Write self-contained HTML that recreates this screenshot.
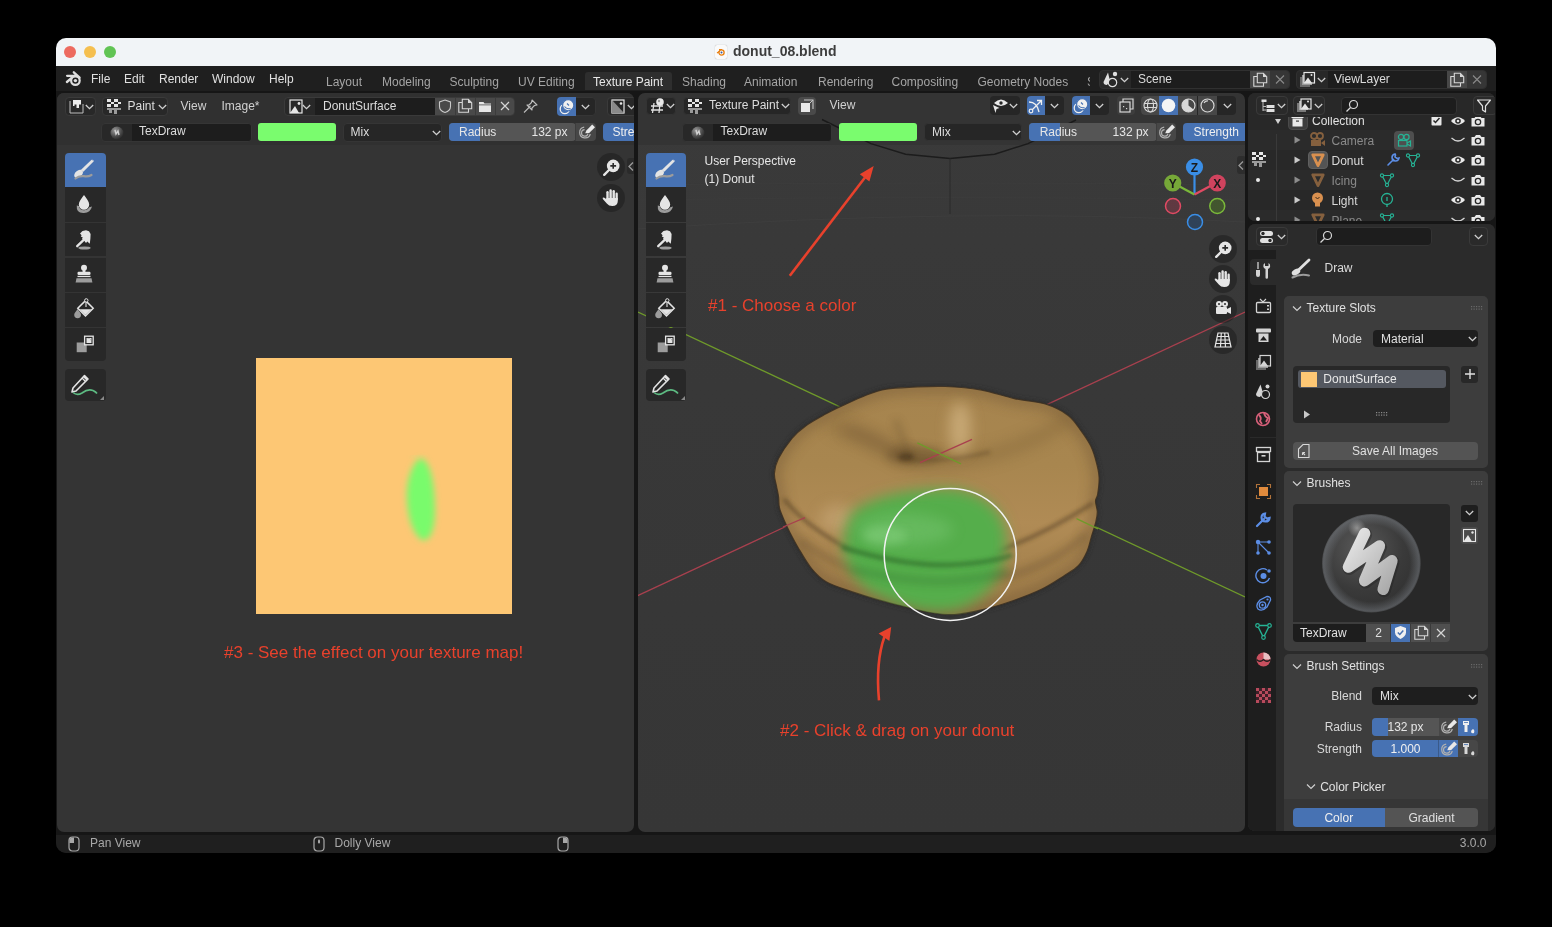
<!DOCTYPE html><html><head><meta charset="utf-8"><style>
html,body{margin:0;padding:0;background:#000;width:1552px;height:927px;overflow:hidden}
body>div,body>svg{position:absolute}
body div,body svg{position:absolute}
.t{position:absolute;font-family:"Liberation Sans",sans-serif;white-space:nowrap}
</style></head><body><div style="position:absolute;left:0;top:0;width:1552px;height:927px;will-change:transform">
<div style="left:56px;top:38px;width:1440px;height:815px;background:#161616;border-radius:10px;"></div>
<div style="left:56px;top:38px;width:1440px;height:28px;background:#f1f4f7;border-radius:10px 10px 0 0"></div>
<div style="left:64px;top:46px;width:12px;height:12px;background:#ed6a5f;border-radius:6px;"></div>
<div style="left:84px;top:46px;width:12px;height:12px;background:#f5bf4f;border-radius:6px;"></div>
<div style="left:104px;top:46px;width:12px;height:12px;background:#61c454;border-radius:6px;"></div>
<div class="t" style="left:733px;top:44px;font-size:14px;line-height:14px;color:#3d3d3d;font-weight:bold;">donut_08.blend</div>
<div style="left:715px;top:45px;width:12px;height:14px;background:#fafafa;border-radius:2px;box-shadow:0 0 1px #999"></div>
<svg style="position:absolute;left:716px;top:47px;" width="10" height="10" viewBox="0 0 10 10"><circle cx="5.5" cy="5.5" r="2.6" fill="none" stroke="#e87d0d" stroke-width="1.3"/><circle cx="5.5" cy="5.5" r="1" fill="#3a5a9a"/><path d="M1 6 L4 4 M3 2.5 L6 2.5" stroke="#e87d0d" stroke-width="1.2"/></svg>
<div style="left:56px;top:66px;width:1440px;height:25px;background:#1f1f1f;"></div>
<div style="left:57px;top:93px;width:577px;height:739px;background:#343434;border-radius:7px;"></div>
<div style="left:638px;top:93px;width:607px;height:739px;background:linear-gradient(#3a3a3a,#383838 40%,#363636);border-radius:7px;"></div>
<div style="left:1248px;top:93px;width:247px;height:128px;background:#282828;border-radius:7px;"></div>
<div style="left:1248px;top:224px;width:247px;height:607px;background:#2b2b2b;border-radius:7px;"></div>
<div style="left:56px;top:835px;width:1440px;height:18px;background:#1f1f1f;border-radius:0 0 10px 10px"></div>
<svg style="position:absolute;left:60px;top:68px;" width="30" height="22" viewBox="0 0 30 22"><g stroke="#dedede" fill="none" stroke-linecap="round"><circle cx="15.4" cy="12.6" r="4.3" stroke-width="2.2"/><path d="M7.1 7.8 L14.7 7.8 M13.8 4.3 L19.6 9.6 M6.9 14 L11.6 10" stroke-width="2.3"/></g><circle cx="15.4" cy="12.6" r="1.7" fill="#dedede"/></svg>
<div class="t" style="left:91px;top:73px;font-size:12px;line-height:12px;color:#e0e0e0;font-weight:normal;">File</div>
<div class="t" style="left:124px;top:73px;font-size:12px;line-height:12px;color:#e0e0e0;font-weight:normal;">Edit</div>
<div class="t" style="left:159px;top:73px;font-size:12px;line-height:12px;color:#e0e0e0;font-weight:normal;">Render</div>
<div class="t" style="left:212px;top:73px;font-size:12px;line-height:12px;color:#e0e0e0;font-weight:normal;">Window</div>
<div class="t" style="left:269px;top:73px;font-size:12px;line-height:12px;color:#e0e0e0;font-weight:normal;">Help</div>
<div style="left:585px;top:72px;width:86.5px;height:18px;background:#2e2e2e;border-radius:3px 3px 0 0"></div>
<div class="t" style="left:326px;top:75.5px;font-size:12px;line-height:12px;color:#a5a5a5;font-weight:normal;">Layout</div>
<div class="t" style="left:382px;top:75.5px;font-size:12px;line-height:12px;color:#a5a5a5;font-weight:normal;">Modeling</div>
<div class="t" style="left:449.5px;top:75.5px;font-size:12px;line-height:12px;color:#a5a5a5;font-weight:normal;">Sculpting</div>
<div class="t" style="left:518px;top:75.5px;font-size:12px;line-height:12px;color:#a5a5a5;font-weight:normal;">UV Editing</div>
<div class="t" style="left:593px;top:75.5px;font-size:12px;line-height:12px;color:#e8e8e8;font-weight:normal;">Texture Paint</div>
<div class="t" style="left:682px;top:75.5px;font-size:12px;line-height:12px;color:#a5a5a5;font-weight:normal;">Shading</div>
<div class="t" style="left:744px;top:75.5px;font-size:12px;line-height:12px;color:#a5a5a5;font-weight:normal;">Animation</div>
<div class="t" style="left:818px;top:75.5px;font-size:12px;line-height:12px;color:#a5a5a5;font-weight:normal;">Rendering</div>
<div class="t" style="left:891.5px;top:75.5px;font-size:12px;line-height:12px;color:#a5a5a5;font-weight:normal;">Compositing</div>
<div class="t" style="left:977.5px;top:75.5px;font-size:12px;line-height:12px;color:#a5a5a5;font-weight:normal;">Geometry Nodes</div>
<div class="t" style="left:1087px;top:75.5px;font-size:12px;line-height:12px;color:#a5a5a5;font-weight:normal;width:3px;overflow:hidden">S</div>
<div style="left:1099px;top:70px;width:191px;height:18.5px;background:#282828;border-radius:4px;box-sizing:border-box;border:1px solid #303030"></div>
<div style="left:1130.5px;top:70.5px;width:119.5px;height:17.5px;background:#1d1d1d;"></div>
<div style="left:1250px;top:70.5px;width:19.5px;height:17.5px;background:#474747;"></div>
<div style="left:1269.5px;top:70.5px;width:19.5px;height:17.5px;background:#363636;border-radius:0 3px 3px 0"></div>
<div class="t" style="left:1138px;top:73px;font-size:12px;line-height:12px;color:#dcdcdc;font-weight:normal;">Scene</div>
<div style="left:1296px;top:70px;width:191px;height:18.5px;background:#282828;border-radius:4px;box-sizing:border-box;border:1px solid #303030"></div>
<div style="left:1327.5px;top:70.5px;width:119.5px;height:17.5px;background:#1d1d1d;"></div>
<div style="left:1447px;top:70.5px;width:19.5px;height:17.5px;background:#474747;"></div>
<div style="left:1466.5px;top:70.5px;width:19.5px;height:17.5px;background:#363636;border-radius:0 3px 3px 0"></div>
<div class="t" style="left:1334px;top:73px;font-size:12px;line-height:12px;color:#dcdcdc;font-weight:normal;">ViewLayer</div>
<svg style="position:absolute;left:1102px;top:71px;" width="20" height="17" viewBox="0 0 20 17"><path d="M6 1.5 L1.5 11 Q1.5 14 5 14 L8 10 Z" fill="#e0e0e0"/><circle cx="13" cy="3" r="2.2" fill="#e0e0e0"/><circle cx="10.5" cy="11.5" r="4.2" stroke="#e0e0e0" stroke-width="1.2" fill="#282828"/></svg>
<svg style="position:absolute;left:1120.0px;top:76.5px;" width="9" height="6" viewBox="0 0 9 6"><path d="M0.8 1 L4.5 4.7 L8.2 1" stroke="#cfcfcf" stroke-width="1.3" fill="none"/></svg>
<svg style="position:absolute;left:1252px;top:72px;" width="16" height="15" viewBox="0 0 16 15"><path d="M5 4.5 H1.8 V14.2 H11.5 V11" stroke="#d8d8d8" stroke-width="1.1" fill="none"/><path d="M5.3 1.3 H11.3 L14.7 4.7 V10.7 H5.3 Z" stroke="#d8d8d8" stroke-width="1.1" fill="none"/><path d="M11 1.3 L14.7 5 H11 Z" fill="#d8d8d8"/></svg>
<svg style="position:absolute;left:1272px;top:72px;" width="16" height="15" viewBox="0 0 16 15"><path d="M4 3.5 L12 11.5 M12 3.5 L4 11.5" stroke="#8a8a8a" stroke-width="1.1"/></svg>
<svg style="position:absolute;left:1299px;top:71px;" width="20" height="17" viewBox="0 0 20 17"><rect x="1" y="6" width="10" height="10" fill="#6a6a6a"/><rect x="3" y="4" width="10" height="10" fill="#9a9a9a"/><rect x="5" y="1.5" width="10.5" height="10.5" fill="#282828" stroke="#e6e6e6" stroke-width="1.2"/><path d="M5 12 L9 6.5 L13 12 Z" fill="#e6e6e6"/><circle cx="12.5" cy="4" r="1" fill="#e6e6e6"/></svg>
<svg style="position:absolute;left:1317.0px;top:76.5px;" width="9" height="6" viewBox="0 0 9 6"><path d="M0.8 1 L4.5 4.7 L8.2 1" stroke="#cfcfcf" stroke-width="1.3" fill="none"/></svg>
<svg style="position:absolute;left:1449px;top:72px;" width="16" height="15" viewBox="0 0 16 15"><path d="M5 4.5 H1.8 V14.2 H11.5 V11" stroke="#d8d8d8" stroke-width="1.1" fill="none"/><path d="M5.3 1.3 H11.3 L14.7 4.7 V10.7 H5.3 Z" stroke="#d8d8d8" stroke-width="1.1" fill="none"/><path d="M11 1.3 L14.7 5 H11 Z" fill="#d8d8d8"/></svg>
<svg style="position:absolute;left:1469px;top:72px;" width="16" height="15" viewBox="0 0 16 15"><path d="M4 3.5 L12 11.5 M12 3.5 L4 11.5" stroke="#8a8a8a" stroke-width="1.1"/></svg>
<div style="position:absolute;left:57px;top:93px;width:577px;height:739px;overflow:hidden;border-radius:7px"><div style="position:absolute;left:-57px;top:-93px;width:1552px;height:927px">
<div style="left:57px;top:93px;width:577px;height:52px;background:#303030;"></div>
<div style="left:64.5px;top:96.5px;width:31px;height:19px;background:#282828;border-radius:4px;box-sizing:border-box;border:1px solid #3a3a3a"></div>
<svg style="position:absolute;left:69px;top:99px;" width="15" height="15" viewBox="0 0 15 15"><path d="M1 2 V14 H14 V5" stroke="#bdbdbd" stroke-width="1" fill="none"/><path d="M4 1 H12 V5.5 H10 V9 H7.5 V5.5 H5.5 V7 H4 Z" fill="#ececec"/></svg>
<svg style="position:absolute;left:84.5px;top:103.5px;" width="9" height="6" viewBox="0 0 9 6"><path d="M0.8 1 L4.5 4.7 L8.2 1" stroke="#cfcfcf" stroke-width="1.3" fill="none"/></svg>
<div style="left:101.5px;top:96.5px;width:66px;height:19px;background:#282828;border-radius:4px;box-sizing:border-box;border:1px solid #3a3a3a"></div>
<svg style="position:absolute;left:107px;top:99px" width="14" height="15" viewBox="0 0 14 15" shape-rendering="crispEdges"><rect x="0.0" y="0.0" width="3.5" height="2.6" fill="#e6e6e6"/><rect x="0.0" y="5.2" width="3.5" height="2.6" fill="#e6e6e6"/><rect x="3.5" y="2.6" width="3.5" height="2.6" fill="#e6e6e6"/><rect x="7.0" y="0.0" width="3.5" height="2.6" fill="#e6e6e6"/><rect x="7.0" y="5.2" width="3.5" height="2.6" fill="#e6e6e6"/><rect x="10.5" y="2.6" width="3.5" height="2.6" fill="#e6e6e6"/><path d="M0 8.6 H14 V11 H10 V14.5 H7 V11 H4.5 V13.5 H1.5 V11 H0 Z" fill="#9a9a9a"/></svg>
<div class="t" style="left:127.5px;top:99.5px;font-size:12px;line-height:12px;color:#dcdcdc;font-weight:normal;">Paint</div>
<svg style="position:absolute;left:157.5px;top:103.5px;" width="9" height="6" viewBox="0 0 9 6"><path d="M0.8 1 L4.5 4.7 L8.2 1" stroke="#cfcfcf" stroke-width="1.3" fill="none"/></svg>
<div class="t" style="left:180.5px;top:99.5px;font-size:12px;line-height:12px;color:#d0d0d0;font-weight:normal;">View</div>
<div class="t" style="left:221.5px;top:99.5px;font-size:12px;line-height:12px;color:#d0d0d0;font-weight:normal;">Image*</div>
<div style="left:284px;top:96.5px;width:231px;height:19px;background:#282828;border-radius:4px;box-sizing:border-box;border:1px solid #3a3a3a"></div>
<svg style="position:absolute;left:288.5px;top:99px;" width="14" height="15" viewBox="0 0 14 15"><rect x="1" y="1" width="12" height="13" stroke="#e6e6e6" stroke-width="1.2" fill="none"/><path d="M1 14 L6 7 L10 14 Z" fill="#e6e6e6"/><circle cx="10" cy="4.5" r="1.4" fill="#e6e6e6"/></svg>
<svg style="position:absolute;left:301.5px;top:103.5px;" width="9" height="6" viewBox="0 0 9 6"><path d="M0.8 1 L4.5 4.7 L8.2 1" stroke="#cfcfcf" stroke-width="1.3" fill="none"/></svg>
<div style="left:315px;top:97.5px;width:120px;height:17px;background:#1d1d1d;"></div>
<div class="t" style="left:323px;top:99.7px;font-size:12px;line-height:12px;color:#dcdcdc;font-weight:normal;">DonutSurface</div>
<div style="left:435px;top:97.5px;width:79px;height:17px;background:#494949;border-radius:0 3px 3px 0"></div>
<div style="left:454.5px;top:97.5px;width:1px;height:17px;background:#3b3b3b;"></div>
<div style="left:474.5px;top:97.5px;width:1px;height:17px;background:#3b3b3b;"></div>
<div style="left:494.5px;top:97.5px;width:1px;height:17px;background:#3b3b3b;"></div>
<svg style="position:absolute;left:437px;top:98px;" width="16" height="16" viewBox="0 0 16 16"><path d="M8 2 L13.5 4 V8.5 C13.5 11.5 11 13.5 8 14.5 C5 13.5 2.5 11.5 2.5 8.5 V4 Z" stroke="#c8c8c8" stroke-width="1.1" fill="none"/></svg>
<svg style="position:absolute;left:457px;top:98px;" width="16" height="16" viewBox="0 0 16 16"><path d="M5 4.5 H1.8 V14.2 H11.5 V11" stroke="#d8d8d8" stroke-width="1.1" fill="none"/><path d="M5.3 1.3 H11.3 L14.7 4.7 V10.7 H5.3 Z" stroke="#d8d8d8" stroke-width="1.1" fill="none"/><path d="M11 1.3 L14.7 5 H11 Z" fill="#d8d8d8"/></svg>
<svg style="position:absolute;left:477px;top:98px;" width="16" height="16" viewBox="0 0 16 16"><path d="M2 4 H6.5 L7.5 5.5 H14 V14 H2 Z" fill="#e6e6e6"/><rect x="2" y="6.5" width="12" height="0.8" fill="#494949"/></svg>
<svg style="position:absolute;left:497px;top:98px;" width="16" height="16" viewBox="0 0 16 16"><path d="M4 4 L12 12 M12 4 L4 12" stroke="#d6d6d6" stroke-width="1.2"/></svg>
<svg style="position:absolute;left:522px;top:98px;" width="17" height="16" viewBox="0 0 17 16"><path d="M8.5 8 L2 14.5" stroke="#bdbdbd" stroke-width="1.1"/><path d="M10 2 L15 7 L12.5 7.5 L10 10 L10 12 L5 7 L7 7 L9.5 4.5 Z" stroke="#bdbdbd" stroke-width="1.1" fill="none" stroke-linejoin="round"/></svg>
<div style="left:557px;top:97px;width:38.5px;height:18.5px;background:#262626;border-radius:4px;box-sizing:border-box;border:1px solid #353535"></div>
<div style="left:557px;top:97px;width:19px;height:18.5px;background:#4772b3;border-radius:4px 0 0 4px"></div>
<svg style="position:absolute;left:558px;top:97.5px;" width="17" height="17" viewBox="0 0 17 17"><circle cx="6.8" cy="11" r="4.6" stroke="#f0f0f0" stroke-width="1.3" fill="none"/><circle cx="10.2" cy="7.2" r="5.6" fill="#f0f0f0" stroke="#4772b3" stroke-width="1.2"/><path d="M6.5 8.5 Q8.5 11.5 12.5 10.5 M9 5.5 L11 7.5" stroke="#4772b3" stroke-width="1.1" fill="none"/></svg>
<svg style="position:absolute;left:581.0px;top:103.5px;" width="9" height="6" viewBox="0 0 9 6"><path d="M0.8 1 L4.5 4.7 L8.2 1" stroke="#cfcfcf" stroke-width="1.3" fill="none"/></svg>
<div style="left:607px;top:96.5px;width:40px;height:19px;background:#282828;border-radius:4px;box-sizing:border-box;border:1px solid #3a3a3a"></div>
<svg style="position:absolute;left:611px;top:99px;" width="15" height="15" viewBox="0 0 15 15"><rect x="1" y="1" width="12" height="13" stroke="#eaeaea" stroke-width="1.2" fill="none"/><path d="M1 1 L13 14 L1 14 Z" fill="#8a8a8a"/><circle cx="10" cy="4.5" r="1.3" fill="#eaeaea"/></svg>
<svg style="position:absolute;left:626.5px;top:103.5px;" width="9" height="6" viewBox="0 0 9 6"><path d="M0.8 1 L4.5 4.7 L8.2 1" stroke="#cfcfcf" stroke-width="1.3" fill="none"/></svg>
<div style="left:100.5px;top:122.5px;width:151px;height:19px;background:#282828;border-radius:4px;box-sizing:border-box;border:1px solid #353535"></div>
<div style="left:131.5px;top:123.5px;width:119px;height:17px;background:#1d1d1d;border-radius:0 3px 3px 0"></div>
<svg style="position:absolute;left:109.5px;top:125.5px;" width="14" height="14" viewBox="0 0 14 14"><defs><radialGradient id="bg100" cx="0.35" cy="0.3" r="0.8"><stop offset="0" stop-color="#9a9a9a"/><stop offset="0.6" stop-color="#4a4a4a"/><stop offset="1" stop-color="#202020"/></radialGradient></defs><circle cx="7" cy="7" r="6.5" fill="url(#bg100)"/><path d="M5 4 L6 8 L8 5 L9 9" stroke="#d0d0d0" stroke-width="1.4" fill="none"/></svg>
<div class="t" style="left:139.0px;top:125.0px;font-size:12px;line-height:12px;color:#dcdcdc;font-weight:normal;">TexDraw</div>
<div style="left:258px;top:122.7px;width:78px;height:18.5px;background:#7afc6e;border-radius:3px;"></div>
<div style="left:342.5px;top:122.5px;width:99px;height:19px;background:#262626;border-radius:4px;box-sizing:border-box;border:1px solid #353535"></div>
<div class="t" style="left:350.5px;top:125.5px;font-size:12px;line-height:12px;color:#dcdcdc;font-weight:normal;">Mix</div>
<svg style="position:absolute;left:431.5px;top:129.5px;" width="9" height="6" viewBox="0 0 9 6"><path d="M0.8 1 L4.5 4.7 L8.2 1" stroke="#cfcfcf" stroke-width="1.3" fill="none"/></svg>
<div style="left:448.5px;top:122.5px;width:127px;height:18.5px;background:#555555;border-radius:4px;overflow:hidden"></div>
<div style="left:448.5px;top:122.5px;width:31.5px;height:18.5px;background:#4772b3;border-radius:4px 0 0 4px"></div>
<div class="t" style="left:459.0px;top:125.80000000000001px;font-size:12px;line-height:12px;color:#e6e6e6;font-weight:normal;">Radius</div>
<div class="t" style="right:984.5px;text-align:right;top:125.80000000000001px;font-size:12px;line-height:12px;color:#e6e6e6;font-weight:normal;">132 px</div>
<div style="left:575.5px;top:122.5px;width:20.5px;height:18.5px;background:#474747;border-radius:0 4px 4px 0"></div>
<div style="left:575px;top:122.5px;width:1px;height:18.5px;background:#3d3d3d;"></div>
<svg style="position:absolute;left:577.5px;top:123px;" width="18" height="18" viewBox="0 0 18 18"><path d="M7.2 10.2 L8.4 7.4 L14.2 1.6 L17 4.2 L11.2 10 Z" fill="#e8e8e8"/><path d="M6.6 6.6 A3.3 3.3 0 1 0 10 10.6" stroke="#b0b0b0" stroke-width="1.2" fill="none"/><path d="M6.2 4.2 A5.4 5.4 0 1 0 12.3 11" stroke="#b0b0b0" stroke-width="1.2" fill="none"/></svg>
<div style="left:602.5px;top:122.5px;width:40px;height:18.5px;background:#4772b3;border-radius:4px;"></div>
<div class="t" style="left:612.5px;top:125.5px;font-size:12px;line-height:12px;color:#f0f0f0;font-weight:normal;">Strength</div>
<div style="left:65px;top:153px;width:40.8px;height:33.7px;background:#4772b3;border-radius:4px 4px 0 0;"></div>
<div style="left:65px;top:186.7px;width:40.8px;height:34.9px;background:#282828;"></div>
<div style="left:65px;top:222.6px;width:40.8px;height:33.9px;background:#282828;"></div>
<div style="left:65px;top:257.5px;width:40.8px;height:34.2px;background:#282828;"></div>
<div style="left:65px;top:292.7px;width:40.8px;height:34.2px;background:#282828;"></div>
<div style="left:65px;top:327.9px;width:40.8px;height:33.5px;background:#282828;border-radius:0 0 4px 4px;"></div>
<div style="left:65px;top:368.7px;width:40.8px;height:32.6px;background:#282828;border-radius:4px;"></div>
<svg style="position:absolute;left:65px;top:153px;" width="41" height="34" viewBox="0 0 41 34"><path d="M28.8 8.2 L26.6 6.8 L16 16.8 L18.3 18.8 Z" fill="#e4e4e4"/><path d="M28.8 8.2 Q28.5 6.5 26.6 6.8" fill="#e4e4e4"/><ellipse cx="13.6" cy="20.8" rx="5" ry="3.2" transform="rotate(-38 13.6 20.8)" fill="#e4e4e4"/><path d="M10.5 25.5 Q14 22.5 19 23.2 Q23 24 26.5 22" stroke="#9c9c9c" stroke-width="2.2" fill="none" stroke-linecap="round"/></svg>
<svg style="position:absolute;left:65px;top:186.7px;" width="41" height="35" viewBox="0 0 41 35"><path d="M11.8 18.5 Q11 26.5 19 26 Q25.5 25.5 27 19.5 L24.3 20.3 Q22.5 23.3 19 23.3 Q14.5 23.3 14 19 Z" fill="#9c9c9c"/><path d="M19 8 C16.5 11.5 13.8 14.5 13.8 17.5 A5.2 5.2 0 0 0 24.2 17.5 C24.2 14.5 21.5 11.5 19 8 Z" fill="#e4e4e4"/></svg>
<svg style="position:absolute;left:65px;top:222.6px;" width="41" height="34" viewBox="0 0 41 34"><ellipse cx="19.5" cy="25" rx="6.2" ry="1.6" fill="#9c9c9c"/><path d="M15 10.5 L17.5 8 L21 7.2 L24 8.2 L25.6 11 L25.4 15.5 L24.8 20.8 L22.3 18.6 L21 20 L19 17.5 L17 15.8 L17.8 14.5 L15.8 13.6 L16.6 12.2 Z" fill="#e4e4e4"/><path d="M12.2 23.2 L19.5 16.2" stroke="#e4e4e4" stroke-width="2.3" stroke-linecap="round"/></svg>
<svg style="position:absolute;left:65px;top:257.5px;" width="41" height="34" viewBox="0 0 41 34"><circle cx="19" cy="9.8" r="3" fill="#e4e4e4"/><rect x="17.6" y="11" width="2.8" height="3.5" fill="#e4e4e4"/><rect x="12.5" y="13.8" width="13" height="3.2" rx="1.2" fill="#e4e4e4"/><rect x="12.5" y="17.8" width="13" height="1.3" fill="#e4e4e4"/><path d="M11.5 20.2 H26.5 L27.4 24.5 H10.6 Z" fill="#9c9c9c"/></svg>
<svg style="position:absolute;left:65px;top:292.7px;" width="41" height="34" viewBox="0 0 41 34"><path d="M20.5 7.6 L28.2 15.3 L20.5 23 L12.8 15.3 Z" stroke="#e4e4e4" stroke-width="1.5" fill="none"/><path d="M14.6 16.3 H26.4 L20.5 22 Z" fill="#e4e4e4"/><path d="M21 9 V14" stroke="#e4e4e4" stroke-width="1.1"/><circle cx="21.3" cy="7.4" r="1.7" stroke="#e4e4e4" stroke-width="1" fill="#282828"/><path d="M12.6 16 C11 18.5 9.2 20 9.2 21.8 A3.4 3.4 0 0 0 16 21.8 C16 20 14.2 18.5 12.6 16 Z" fill="#9c9c9c"/></svg>
<svg style="position:absolute;left:65px;top:327.9px;" width="41" height="34" viewBox="0 0 41 34"><rect x="11.7" y="14.5" width="10" height="9.7" fill="#9c9c9c"/><rect x="19.6" y="8.2" width="8.6" height="8.6" fill="#282828" stroke="#e4e4e4" stroke-width="1.3"/><path d="M21.5 10 H26.5 V15 Q26.5 10 21.5 10 Z" fill="#e4e4e4"/><path d="M21.5 10 Q26.5 10 26.5 15 L21.5 15 Z" fill="#e4e4e4"/></svg>
<svg style="position:absolute;left:65px;top:368.7px;" width="41" height="33" viewBox="0 0 41 33"><path d="M19.5 6.5 L23 10 L11 22 L7 23 L8 19 Z" stroke="#e4e4e4" stroke-width="1.6" fill="none" stroke-linejoin="round"/><path d="M17 9 L20.5 12.5" stroke="#e4e4e4" stroke-width="1.3"/><path d="M19.5 6.5 L23 10 L21.5 11.5 L18 8 Z" fill="#e4e4e4"/><path d="M8 23.5 Q12 27 17 24 Q23 19.5 28 21.5 Q31 23 32 24.5" stroke="#5dbb82" stroke-width="1.6" fill="none"/></svg>
<svg style="position:absolute;left:100px;top:396px;" width="4" height="4" viewBox="0 0 4 4"><path d="M4 0 V4 H0 Z" fill="#8a8a8a"/></svg>
<div style="left:597px;top:153px;width:28px;height:28px;background:rgba(30,30,30,0.55);border-radius:14px;"></div>
<svg style="position:absolute;left:601px;top:157px;" width="20" height="20" viewBox="0 0 20 20"><circle cx="12.2" cy="8.9" r="6.3" fill="#e6e6e6"/><path d="M12.2 6 V11.8 M9.3 8.9 H15.1" stroke="#2a2a2a" stroke-width="1.6"/><path d="M8 13 L3.2 17.8" stroke="#e6e6e6" stroke-width="2.4" stroke-linecap="round"/></svg>
<div style="left:597px;top:183.5px;width:28px;height:28px;background:rgba(30,30,30,0.55);border-radius:14px;"></div>
<svg style="position:absolute;left:601px;top:187.5px;" width="20" height="20" viewBox="0 0 20 20"><rect x="5.3" y="3" width="2.4" height="10" rx="1.2" fill="#e6e6e6"/><rect x="8.4" y="1.2" width="2.4" height="11" rx="1.2" fill="#e6e6e6"/><rect x="11.5" y="2" width="2.4" height="10" rx="1.2" fill="#e6e6e6"/><rect x="14.5" y="4.5" width="2.3" height="8" rx="1.15" fill="#e6e6e6"/><path d="M5.3 10 H16.8 V13 Q16.8 18 11.2 18 Q7.8 18 5.8 15.5 L1.8 11 Q1.2 9.6 2.7 9.6 Q3.8 9.6 5.3 11.2 Z" fill="#e6e6e6"/></svg>
<div style="left:627px;top:158px;width:9px;height:16px;background:rgba(30,30,30,0.45);border-radius:3px;"></div>
<svg style="position:absolute;left:627px;top:161px;" width="8" height="11" viewBox="0 0 8 11"><path d="M6 1.5 L2 5.5 L6 9.5" stroke="#9a9a9a" stroke-width="1.3" fill="none"/></svg>
</div></div>
<div style="position:absolute;left:1248px;top:93px;width:247px;height:128px;overflow:hidden;border-radius:7px"><div style="position:absolute;left:-1248px;top:-93px;width:1552px;height:927px">
<div style="left:1248px;top:110px;width:247px;height:20px;background:#282828;"></div>
<div style="left:1248px;top:130px;width:247px;height:20px;background:#2b2b2b;"></div>
<div style="left:1248px;top:150px;width:247px;height:20px;background:#282828;"></div>
<div style="left:1248px;top:170px;width:247px;height:20px;background:#2b2b2b;"></div>
<div style="left:1248px;top:190px;width:247px;height:20px;background:#282828;"></div>
<div style="left:1248px;top:210px;width:247px;height:20px;background:#2b2b2b;"></div>
<div style="left:1276px;top:134px;width:1px;height:90px;background:#3a3a3a;"></div>
<svg style="position:absolute;left:1274.5px;top:118.5px;" width="6" height="5" viewBox="0 0 6 5"><path d="M0 0 H6 L3 5 Z" fill="#d0d0d0"/></svg>
<div style="left:1287.5px;top:111px;width:20px;height:19px;background:#3d3d3d;border-radius:4px;box-sizing:border-box;border:1px solid #4a4a4a"></div>
<svg style="position:absolute;left:1290px;top:113px;" width="15" height="15" viewBox="0 0 15 15"><rect x="1.5" y="2" width="12" height="3" fill="#e8e8e8"/><rect x="2.5" y="5.5" width="10" height="8" fill="#e8e8e8"/><rect x="6" y="7.5" width="3" height="1.2" fill="#3d3d3d"/></svg>
<div class="t" style="left:1312px;top:115px;font-size:12px;line-height:12px;color:#e0e0e0;font-weight:normal;">Collection</div>
<svg style="position:absolute;left:1294px;top:136px;" width="7" height="8" viewBox="0 0 7 8"><path d="M0.5 0.5 L6.5 4 L0.5 7.5 Z" fill="#8c8c8c"/></svg>
<svg style="position:absolute;left:1309px;top:132px;" width="17" height="16" viewBox="0 0 17 16"><circle cx="5" cy="4" r="3" stroke="#85603e" stroke-width="1.8" fill="none"/><circle cx="11" cy="4" r="3" stroke="#85603e" stroke-width="1.8" fill="none"/><rect x="2" y="8" width="10" height="6" fill="#85603e"/><path d="M12 11 L16 8 V14 Z" fill="#85603e"/></svg>
<div class="t" style="left:1331.5px;top:135px;font-size:12px;line-height:12px;color:#8a8a8a;font-weight:normal;">Camera</div>
<svg style="position:absolute;left:1294px;top:156px;" width="7" height="8" viewBox="0 0 7 8"><path d="M0.5 0.5 L6.5 4 L0.5 7.5 Z" fill="#c8c8c8"/></svg>
<div style="left:1307.5px;top:150.5px;width:20px;height:18.5px;background:#545454;border-radius:4px;box-sizing:border-box;border:1px solid #606060"></div>
<svg style="position:absolute;left:1310.5px;top:153px;" width="14" height="14" viewBox="0 0 14 14"><path d="M1.8 1.8 H12.2 L7 12.6 Z" stroke="#d9904f" stroke-width="2.8" fill="none" stroke-linejoin="round"/></svg>
<div class="t" style="left:1331.5px;top:155px;font-size:12px;line-height:12px;color:#d8d8d8;font-weight:normal;">Donut</div>
<svg style="position:absolute;left:1294px;top:176px;" width="7" height="8" viewBox="0 0 7 8"><path d="M0.5 0.5 L6.5 4 L0.5 7.5 Z" fill="#8c8c8c"/></svg>
<svg style="position:absolute;left:1310.5px;top:173px;" width="14" height="14" viewBox="0 0 14 14"><path d="M1.8 1.8 H12.2 L7 12.6 Z" stroke="#85603e" stroke-width="2.8" fill="none" stroke-linejoin="round"/></svg>
<div class="t" style="left:1331.5px;top:175px;font-size:12px;line-height:12px;color:#8a8a8a;font-weight:normal;">Icing</div>
<svg style="position:absolute;left:1294px;top:196px;" width="7" height="8" viewBox="0 0 7 8"><path d="M0.5 0.5 L6.5 4 L0.5 7.5 Z" fill="#c8c8c8"/></svg>
<svg style="position:absolute;left:1310px;top:192px;" width="15" height="16" viewBox="0 0 15 16"><circle cx="7.5" cy="6" r="5.5" fill="#d9904f"/><rect x="5" y="11" width="5" height="3.5" fill="#d9904f"/><path d="M5.5 5 L7.5 7 L9.5 5" stroke="#3a2a1a" stroke-width="1" fill="none"/></svg>
<div class="t" style="left:1331.5px;top:195px;font-size:12px;line-height:12px;color:#d8d8d8;font-weight:normal;">Light</div>
<svg style="position:absolute;left:1294px;top:216px;" width="7" height="8" viewBox="0 0 7 8"><path d="M0.5 0.5 L6.5 4 L0.5 7.5 Z" fill="#8c8c8c"/></svg>
<svg style="position:absolute;left:1310.5px;top:213px;" width="14" height="14" viewBox="0 0 14 14"><path d="M1.8 1.8 H12.2 L7 12.6 Z" stroke="#85603e" stroke-width="2.8" fill="none" stroke-linejoin="round"/></svg>
<div class="t" style="left:1331.5px;top:215px;font-size:12px;line-height:12px;color:#8a8a8a;font-weight:normal;">Plane</div>
<div style="left:1393.5px;top:131px;width:20px;height:19px;background:#4f4f4f;border-radius:4px;"></div>
<svg style="position:absolute;left:1395.5px;top:133px;" width="16" height="15" viewBox="0 0 16 15"><circle cx="5" cy="4" r="2.6" stroke="#26b395" stroke-width="1.2" fill="none"/><circle cx="10.5" cy="4" r="2.6" stroke="#26b395" stroke-width="1.2" fill="none"/><rect x="2.5" y="7.5" width="8.5" height="5.5" stroke="#26b395" stroke-width="1.2" fill="none"/><path d="M11 10 L14.5 8 V13 L11 11" stroke="#26b395" stroke-width="1.2" fill="none"/></svg>
<svg style="position:absolute;left:1384.5px;top:152px;" width="16" height="16" viewBox="0 0 16 16"><path d="M3 13 L8.5 7.5 M10 2 A3.5 3.5 0 1 0 14 6 L12 6.5 L10 5 L10.5 3 Z" stroke="#5c8ee6" stroke-width="1.6" fill="none" stroke-linecap="round"/></svg>
<svg style="position:absolute;left:1404.75px;top:152px;" width="16" height="16" viewBox="0 0 16 16"><path d="M3 3.5 H13 L8 13 Z" stroke="#26b395" stroke-width="1.2" fill="none"/><circle cx="3" cy="3.5" r="1.6" fill="#282828" stroke="#26b395" stroke-width="1.1"/><circle cx="13" cy="3.5" r="1.6" fill="#282828" stroke="#26b395" stroke-width="1.1"/><circle cx="8" cy="13" r="1.6" fill="#282828" stroke="#26b395" stroke-width="1.1"/></svg>
<svg style="position:absolute;left:1378.5px;top:172px;" width="16" height="16" viewBox="0 0 16 16"><path d="M3 3.5 H13 L8 13 Z" stroke="#26b395" stroke-width="1.2" fill="none"/><circle cx="3" cy="3.5" r="1.6" fill="#282828" stroke="#26b395" stroke-width="1.1"/><circle cx="13" cy="3.5" r="1.6" fill="#282828" stroke="#26b395" stroke-width="1.1"/><circle cx="8" cy="13" r="1.6" fill="#282828" stroke="#26b395" stroke-width="1.1"/></svg>
<svg style="position:absolute;left:1378.5px;top:192px;" width="16" height="16" viewBox="0 0 16 16"><circle cx="8" cy="7" r="5.5" stroke="#26b395" stroke-width="1.3" fill="none"/><path d="M8 5 V9 M8 12.5 V15" stroke="#26b395" stroke-width="1.3"/></svg>
<svg style="position:absolute;left:1378.5px;top:212px;" width="16" height="16" viewBox="0 0 16 16"><path d="M3 3.5 H13 L8 13 Z" stroke="#26b395" stroke-width="1.2" fill="none"/><circle cx="3" cy="3.5" r="1.6" fill="#282828" stroke="#26b395" stroke-width="1.1"/><circle cx="13" cy="3.5" r="1.6" fill="#282828" stroke="#26b395" stroke-width="1.1"/><circle cx="8" cy="13" r="1.6" fill="#282828" stroke="#26b395" stroke-width="1.1"/></svg>
<svg style="position:absolute;left:1431px;top:115px;" width="11" height="11" viewBox="0 0 11 11"><rect x="0.5" y="0.5" width="10" height="10" rx="1" fill="#e8e8e8"/><path d="M2.5 5.5 L4.5 7.5 L8.5 3" stroke="#282828" stroke-width="1.5" fill="none"/></svg>
<svg style="position:absolute;left:1449.75px;top:115px;" width="16" height="12" viewBox="0 0 16 12"><path d="M1 6 Q8 -1.5 15 6 Q8 13.5 1 6 Z" fill="#e8e8e8"/><circle cx="8" cy="6" r="2.8" fill="#282828"/><circle cx="8" cy="6" r="1.3" fill="#e8e8e8"/></svg>
<svg style="position:absolute;left:1469.75px;top:114px;" width="16" height="14" viewBox="0 0 16 14"><path d="M1.5 4 H4.5 L6 2 H10 L11.5 4 H14.5 V12.5 H1.5 Z" fill="#e8e8e8"/><circle cx="8" cy="8" r="3.3" fill="#282828"/><circle cx="8" cy="8" r="2" fill="#e8e8e8"/></svg>
<svg style="position:absolute;left:1449.75px;top:134px;" width="16" height="12" viewBox="0 0 16 12"><path d="M1.5 4 Q8 10 14.5 4" stroke="#d6d6d6" stroke-width="1.2" fill="none"/></svg>
<svg style="position:absolute;left:1469.75px;top:133px;" width="16" height="14" viewBox="0 0 16 14"><path d="M1.5 4 H4.5 L6 2 H10 L11.5 4 H14.5 V12.5 H1.5 Z" fill="#e8e8e8"/><circle cx="8" cy="8" r="3.3" fill="#282828"/><circle cx="8" cy="8" r="2" fill="#e8e8e8"/></svg>
<svg style="position:absolute;left:1449.75px;top:154px;" width="16" height="12" viewBox="0 0 16 12"><path d="M1 6 Q8 -1.5 15 6 Q8 13.5 1 6 Z" fill="#e8e8e8"/><circle cx="8" cy="6" r="2.8" fill="#282828"/><circle cx="8" cy="6" r="1.3" fill="#e8e8e8"/></svg>
<svg style="position:absolute;left:1469.75px;top:153px;" width="16" height="14" viewBox="0 0 16 14"><path d="M1.5 4 H4.5 L6 2 H10 L11.5 4 H14.5 V12.5 H1.5 Z" fill="#e8e8e8"/><circle cx="8" cy="8" r="3.3" fill="#282828"/><circle cx="8" cy="8" r="2" fill="#e8e8e8"/></svg>
<svg style="position:absolute;left:1449.75px;top:174px;" width="16" height="12" viewBox="0 0 16 12"><path d="M1.5 4 Q8 10 14.5 4" stroke="#d6d6d6" stroke-width="1.2" fill="none"/></svg>
<svg style="position:absolute;left:1469.75px;top:173px;" width="16" height="14" viewBox="0 0 16 14"><path d="M1.5 4 H4.5 L6 2 H10 L11.5 4 H14.5 V12.5 H1.5 Z" fill="#e8e8e8"/><circle cx="8" cy="8" r="3.3" fill="#282828"/><circle cx="8" cy="8" r="2" fill="#e8e8e8"/></svg>
<svg style="position:absolute;left:1449.75px;top:194px;" width="16" height="12" viewBox="0 0 16 12"><path d="M1 6 Q8 -1.5 15 6 Q8 13.5 1 6 Z" fill="#e8e8e8"/><circle cx="8" cy="6" r="2.8" fill="#282828"/><circle cx="8" cy="6" r="1.3" fill="#e8e8e8"/></svg>
<svg style="position:absolute;left:1469.75px;top:193px;" width="16" height="14" viewBox="0 0 16 14"><path d="M1.5 4 H4.5 L6 2 H10 L11.5 4 H14.5 V12.5 H1.5 Z" fill="#e8e8e8"/><circle cx="8" cy="8" r="3.3" fill="#282828"/><circle cx="8" cy="8" r="2" fill="#e8e8e8"/></svg>
<svg style="position:absolute;left:1449.75px;top:214px;" width="16" height="12" viewBox="0 0 16 12"><path d="M1.5 4 Q8 10 14.5 4" stroke="#d6d6d6" stroke-width="1.2" fill="none"/></svg>
<svg style="position:absolute;left:1469.75px;top:213px;" width="16" height="14" viewBox="0 0 16 14"><path d="M1.5 4 H4.5 L6 2 H10 L11.5 4 H14.5 V12.5 H1.5 Z" fill="#e8e8e8"/><circle cx="8" cy="8" r="3.3" fill="#282828"/><circle cx="8" cy="8" r="2" fill="#e8e8e8"/></svg>
<svg style="position:absolute;left:1251.5px;top:152px" width="14" height="15" viewBox="0 0 14 15" shape-rendering="crispEdges"><rect x="0.0" y="0.0" width="3.5" height="2.6" fill="#e6e6e6"/><rect x="0.0" y="5.2" width="3.5" height="2.6" fill="#e6e6e6"/><rect x="3.5" y="2.6" width="3.5" height="2.6" fill="#e6e6e6"/><rect x="7.0" y="0.0" width="3.5" height="2.6" fill="#e6e6e6"/><rect x="7.0" y="5.2" width="3.5" height="2.6" fill="#e6e6e6"/><rect x="10.5" y="2.6" width="3.5" height="2.6" fill="#e6e6e6"/><path d="M0 8.6 H14 V11 H10 V14.5 H7 V11 H4.5 V13.5 H1.5 V11 H0 Z" fill="#9a9a9a"/></svg>
<div style="left:1255.5px;top:177.5px;width:4px;height:4px;background:#e8e8e8;border-radius:2px;"></div>
<div style="left:1255.5px;top:217px;width:4px;height:4px;background:#e8e8e8;border-radius:2px;"></div>
<div style="left:1248px;top:93px;width:247px;height:24px;background:#282828;"></div>
<div style="left:1256px;top:96px;width:31.5px;height:19px;background:#2a2a2a;border-radius:4px;box-sizing:border-box;border:1px solid #3a3a3a"></div>
<svg style="position:absolute;left:1260px;top:98px;" width="16" height="16" viewBox="0 0 16 16"><rect x="1.5" y="1.5" width="5" height="2.5" fill="#e0e0e0"/><path d="M3 4 V13 M3 8.5 H6 M3 12 H6" stroke="#bdbdbd" stroke-width="1"/><rect x="6.5" y="7" width="8" height="3" fill="#e0e0e0"/><rect x="6.5" y="11" width="8" height="3" fill="#e0e0e0"/></svg>
<svg style="position:absolute;left:1276.5px;top:103px;" width="9" height="6" viewBox="0 0 9 6"><path d="M0.8 1 L4.5 4.7 L8.2 1" stroke="#cfcfcf" stroke-width="1.3" fill="none"/></svg>
<div style="left:1293px;top:96px;width:31.5px;height:19px;background:#2a2a2a;border-radius:4px;box-sizing:border-box;border:1px solid #3a3a3a"></div>
<svg style="position:absolute;left:1296px;top:98px;" width="16" height="16" viewBox="0 0 16 16"><rect x="1" y="5" width="9" height="9" fill="#7a7a7a"/><rect x="3" y="3" width="9" height="9" fill="#a8a8a8"/><rect x="5" y="1" width="10" height="10" fill="#2a2a2a" stroke="#e6e6e6" stroke-width="1.2"/><path d="M5 11 L9 5.5 L13 11 Z" fill="#e6e6e6"/><circle cx="12" cy="3.5" r="1" fill="#e6e6e6"/></svg>
<svg style="position:absolute;left:1314.0px;top:103px;" width="9" height="6" viewBox="0 0 9 6"><path d="M0.8 1 L4.5 4.7 L8.2 1" stroke="#cfcfcf" stroke-width="1.3" fill="none"/></svg>
<div style="left:1341px;top:96.5px;width:116px;height:18.5px;background:#1d1d1d;border-radius:4px;box-sizing:border-box;border:1px solid #333"></div>
<svg style="position:absolute;left:1345px;top:99px;" width="14" height="14" viewBox="0 0 14 14"><circle cx="8.5" cy="5.5" r="4" stroke="#d8d8d8" stroke-width="1.2" fill="none"/><path d="M5.5 8.5 L1.5 12.5" stroke="#d8d8d8" stroke-width="1.3"/></svg>
<div style="left:1473px;top:96px;width:24px;height:19px;background:#2a2a2a;border-radius:4px;box-sizing:border-box;border:1px solid #3a3a3a"></div>
<svg style="position:absolute;left:1476px;top:98px;" width="16" height="16" viewBox="0 0 16 16"><path d="M1.5 2 H14.5 L9.5 8 V14 L6.5 12 V8 Z" stroke="#e0e0e0" stroke-width="1.2" fill="none" stroke-linejoin="round"/></svg>
</div></div>
<div style="position:absolute;left:1248px;top:224px;width:247px;height:607px;overflow:hidden;border-radius:7px"><div style="position:absolute;left:-1248px;top:-224px;width:1552px;height:927px">
<div style="left:1248px;top:224px;width:247px;height:607px;background:#2b2b2b;"></div>
<div style="left:1248px;top:249.5px;width:28px;height:590px;background:#1e1e1e;"></div>
<div style="left:1250px;top:258.5px;width:26px;height:26px;background:#2b2b2b;border-radius:4px 0 0 4px"></div>
<div style="left:1250px;top:437px;width:26px;height:1px;background:#2a2a2a;"></div>
<div style="left:1256px;top:227px;width:31.5px;height:19px;background:#2a2a2a;border-radius:4px;box-sizing:border-box;border:1px solid #3a3a3a"></div>
<svg style="position:absolute;left:1259px;top:229px;" width="16" height="16" viewBox="0 0 16 16"><rect x="1" y="2" width="13" height="5" rx="2.5" fill="#e0e0e0"/><rect x="1" y="9" width="13" height="5" rx="2.5" fill="#e0e0e0"/><circle cx="4" cy="4.5" r="1.7" fill="#2a2a2a"/><circle cx="11" cy="11.5" r="1.7" fill="#2a2a2a"/></svg>
<svg style="position:absolute;left:1276.5px;top:233.5px;" width="9" height="6" viewBox="0 0 9 6"><path d="M0.8 1 L4.5 4.7 L8.2 1" stroke="#cfcfcf" stroke-width="1.3" fill="none"/></svg>
<div style="left:1315.5px;top:227px;width:116px;height:19px;background:#1d1d1d;border-radius:4px;box-sizing:border-box;border:1px solid #333"></div>
<svg style="position:absolute;left:1319px;top:230px;" width="14" height="14" viewBox="0 0 14 14"><circle cx="8.5" cy="5.5" r="4" stroke="#d8d8d8" stroke-width="1.2" fill="none"/><path d="M5.5 8.5 L1.5 12.5" stroke="#d8d8d8" stroke-width="1.3"/></svg>
<div style="left:1468.5px;top:227px;width:19px;height:19px;background:#2a2a2a;border-radius:4px;box-sizing:border-box;border:1px solid #3a3a3a"></div>
<svg style="position:absolute;left:1473.5px;top:233.5px;" width="9" height="6" viewBox="0 0 9 6"><path d="M0.8 1 L4.5 4.7 L8.2 1" stroke="#cfcfcf" stroke-width="1.3" fill="none"/></svg>
<svg style="position:absolute;left:1254px;top:261px;" width="18" height="20" viewBox="0 0 18 20"><path d="M4 1 V8" stroke="#d4d4d4" stroke-width="1.3"/><path d="M2 9 H6 V14 A2 2 0 0 1 2 14 Z" fill="#d4d4d4"/><path d="M11 2 A3.3 3.3 0 0 0 11.5 8 V16.5 A1.2 1.2 0 0 0 14 16.5 V8 A3.3 3.3 0 0 0 14.5 2 V5 H11 Z" fill="#d4d4d4"/></svg>
<svg style="position:absolute;left:1255px;top:298px;" width="17" height="16" viewBox="0 0 17 16"><path d="M5 1 L8 4 L11 1" stroke="#d4d4d4" stroke-width="1.1" fill="none"/><rect x="1.5" y="4.5" width="14" height="10" rx="1" stroke="#d4d4d4" stroke-width="1.3" fill="none"/><rect x="12" y="7" width="2" height="1.5" fill="#d4d4d4"/><rect x="12" y="10.5" width="2" height="1.5" fill="#d4d4d4"/></svg>
<svg style="position:absolute;left:1255px;top:327px;" width="17" height="16" viewBox="0 0 17 16"><rect x="1" y="1.5" width="15" height="4" rx="1" fill="#d4d4d4"/><rect x="3.5" y="6.5" width="10" height="8.5" fill="#d4d4d4"/><path d="M5 13.5 L8.5 9 L12 13.5 Z" fill="#1e1e1e"/></svg>
<svg style="position:absolute;left:1255px;top:354px;" width="17" height="17" viewBox="0 0 17 17"><rect x="1" y="6" width="10" height="10" fill="#6a6a6a"/><rect x="3" y="4" width="10" height="10" fill="#9a9a9a"/><rect x="5" y="1.5" width="10.5" height="10.5" fill="#1e1e1e" stroke="#d4d4d4" stroke-width="1.2"/><path d="M5 12 L9 6.5 L13 12 Z" fill="#d4d4d4"/></svg>
<svg style="position:absolute;left:1255px;top:383px;" width="17" height="17" viewBox="0 0 17 17"><path d="M5.5 1.5 L1 11 Q1 14 5 14 L8 10 Z" fill="#d4d4d4"/><circle cx="12.5" cy="3.5" r="2" fill="#d4d4d4"/><circle cx="10.5" cy="11.5" r="4" stroke="#d4d4d4" stroke-width="1.2" fill="#1e1e1e"/></svg>
<svg style="position:absolute;left:1254px;top:410px;" width="18" height="18" viewBox="0 0 18 18"><circle cx="9" cy="9" r="6.5" stroke="#d8607a" stroke-width="1.6" fill="none"/><path d="M5 5 Q8 8 6 11 L8 14 M10 3 Q11 7 14 8 L12 12" stroke="#d8607a" stroke-width="1.8" fill="none"/><path d="M2 16 L16 2" stroke="#1e1e1e" stroke-width="0"/></svg>
<svg style="position:absolute;left:1255px;top:446px;" width="17" height="17" viewBox="0 0 17 17"><rect x="1.5" y="1.5" width="14" height="4" stroke="#d4d4d4" stroke-width="1.3" fill="none"/><rect x="2.5" y="6.5" width="12" height="9" stroke="#d4d4d4" stroke-width="1.3" fill="none"/><rect x="6.5" y="9" width="4" height="1.6" fill="#d4d4d4"/></svg>
<svg style="position:absolute;left:1255px;top:483px;" width="17" height="17" viewBox="0 0 17 17"><rect x="4" y="4" width="9" height="9" fill="#e08a3c"/><path d="M1.5 5 V1.5 H5 M12 1.5 H15.5 V5 M15.5 12 V15.5 H12 M5 15.5 H1.5 V12" stroke="#b0723a" stroke-width="1.1" fill="none"/></svg>
<svg style="position:absolute;left:1254px;top:511px;" width="18" height="18" viewBox="0 0 18 18"><path d="M3 15 L10 8 M11 2.5 A4 4 0 1 0 15.5 7 L13 7.5 L10.5 5.5 L11 2.5 Z" stroke="#5c8ee6" stroke-width="2.2" fill="none" stroke-linecap="round"/></svg>
<svg style="position:absolute;left:1255px;top:539px;" width="17" height="17" viewBox="0 0 17 17"><circle cx="3" cy="3" r="2.2" fill="#5c8ee6"/><circle cx="14" cy="3" r="1.8" fill="#5c8ee6"/><circle cx="3" cy="14" r="1.8" fill="#5c8ee6"/><circle cx="14" cy="14" r="1.8" fill="#5c8ee6"/><path d="M3 3 H14 M3 3 V14 M3 3 L14 14" stroke="#5c8ee6" stroke-width="1.1"/></svg>
<svg style="position:absolute;left:1255px;top:567px;" width="17" height="17" viewBox="0 0 17 17"><path d="M12 3 A7 7 0 1 0 14.5 11" stroke="#5c8ee6" stroke-width="1.4" fill="none"/><circle cx="8.5" cy="9" r="3" fill="#5c8ee6"/><circle cx="14" cy="4" r="1.8" fill="#5c8ee6"/></svg>
<svg style="position:absolute;left:1255px;top:595px;" width="17" height="17" viewBox="0 0 17 17"><path d="M3 14 Q0 10 5 5 L12 1.5 Q16 1.5 15.5 5 L12 12 Q7 17 3 14 Z" stroke="#5c8ee6" stroke-width="1.3" fill="none"/><circle cx="7.5" cy="10" r="3.2" stroke="#5c8ee6" stroke-width="1.3" fill="none"/><circle cx="7.5" cy="10" r="1.2" fill="#5c8ee6"/><circle cx="12.5" cy="4.5" r="1.1" fill="#5c8ee6"/></svg>
<svg style="position:absolute;left:1255px;top:623px;" width="17" height="17" viewBox="0 0 17 17"><path d="M2.5 2.5 H14.5 L8.5 14.5 Z" stroke="#26b395" stroke-width="1.4" fill="none"/><circle cx="2.5" cy="2.5" r="1.8" fill="#1e1e1e" stroke="#26b395" stroke-width="1.2"/><circle cx="14.5" cy="2.5" r="1.8" fill="#1e1e1e" stroke="#26b395" stroke-width="1.2"/><circle cx="8.5" cy="14.5" r="1.8" fill="#1e1e1e" stroke="#26b395" stroke-width="1.2"/></svg>
<svg style="position:absolute;left:1255px;top:651px;" width="17" height="17" viewBox="0 0 17 17"><circle cx="8.5" cy="8.5" r="7" fill="#c8505f"/><path d="M8.5 1.5 V8.5 H15.5 A7 7 0 0 0 8.5 1.5 Z" fill="#e8c0c4"/><path d="M1.5 8.5 Q5 12 8.5 8.5 Q12 12 15.5 8.5" stroke="#1e1e1e" stroke-width="1.2" fill="none"/></svg>
<svg style="position:absolute;left:1255px;top:687px;" width="17" height="17" viewBox="0 0 17 17"><rect x="1" y="1" width="3" height="3" fill="#b84a5c"/><rect x="1" y="4" width="3" height="3" fill="#3e2028"/><rect x="1" y="7" width="3" height="3" fill="#b84a5c"/><rect x="1" y="10" width="3" height="3" fill="#3e2028"/><rect x="1" y="13" width="3" height="3" fill="#b84a5c"/><rect x="4" y="1" width="3" height="3" fill="#3e2028"/><rect x="4" y="4" width="3" height="3" fill="#b84a5c"/><rect x="4" y="7" width="3" height="3" fill="#3e2028"/><rect x="4" y="10" width="3" height="3" fill="#b84a5c"/><rect x="4" y="13" width="3" height="3" fill="#3e2028"/><rect x="7" y="1" width="3" height="3" fill="#b84a5c"/><rect x="7" y="4" width="3" height="3" fill="#3e2028"/><rect x="7" y="7" width="3" height="3" fill="#b84a5c"/><rect x="7" y="10" width="3" height="3" fill="#3e2028"/><rect x="7" y="13" width="3" height="3" fill="#b84a5c"/><rect x="10" y="1" width="3" height="3" fill="#3e2028"/><rect x="10" y="4" width="3" height="3" fill="#b84a5c"/><rect x="10" y="7" width="3" height="3" fill="#3e2028"/><rect x="10" y="10" width="3" height="3" fill="#b84a5c"/><rect x="10" y="13" width="3" height="3" fill="#3e2028"/><rect x="13" y="1" width="3" height="3" fill="#b84a5c"/><rect x="13" y="4" width="3" height="3" fill="#3e2028"/><rect x="13" y="7" width="3" height="3" fill="#b84a5c"/><rect x="13" y="10" width="3" height="3" fill="#3e2028"/><rect x="13" y="13" width="3" height="3" fill="#b84a5c"/></svg>
<svg style="position:absolute;left:1290px;top:258px;" width="22" height="22" viewBox="0 0 22 22"><path d="M19 2 L9 11.5" stroke="#e0e0e0" stroke-width="2.8" stroke-linecap="round"/><ellipse cx="6" cy="14" rx="4.6" ry="2.8" transform="rotate(-30 6 14)" fill="#e0e0e0"/><path d="M2.5 19.5 Q10 15.5 19 17.5" stroke="#9c9c9c" stroke-width="2" fill="none" stroke-linecap="round"/></svg>
<div class="t" style="left:1324.5px;top:261.5px;font-size:12px;line-height:12px;color:#dcdcdc;font-weight:normal;">Draw</div>
<div style="left:1284px;top:295.5px;width:203.5px;height:172.7px;background:#3d3d3d;border-radius:5px;"></div>
<svg style="position:absolute;left:1292px;top:304.5px;" width="10" height="8" viewBox="0 0 10 8"><path d="M1 1.5 L5 5.5 L9 1.5" stroke="#cfcfcf" stroke-width="1.2" fill="none"/></svg>
<div class="t" style="left:1306.5px;top:302.0px;font-size:12px;line-height:12px;color:#e0e0e0;font-weight:normal;">Texture Slots</div>
<svg style="position:absolute;left:1471px;top:305.5px;" width="13" height="6" viewBox="0 0 13 6"><rect x="0.0" y="0.0" width="1.2" height="1.2" fill="#6a6a6a"/><rect x="0.0" y="2.5" width="1.2" height="1.2" fill="#6a6a6a"/><rect x="2.5" y="0.0" width="1.2" height="1.2" fill="#6a6a6a"/><rect x="2.5" y="2.5" width="1.2" height="1.2" fill="#6a6a6a"/><rect x="5.0" y="0.0" width="1.2" height="1.2" fill="#6a6a6a"/><rect x="5.0" y="2.5" width="1.2" height="1.2" fill="#6a6a6a"/><rect x="7.5" y="0.0" width="1.2" height="1.2" fill="#6a6a6a"/><rect x="7.5" y="2.5" width="1.2" height="1.2" fill="#6a6a6a"/><rect x="10.0" y="0.0" width="1.2" height="1.2" fill="#6a6a6a"/><rect x="10.0" y="2.5" width="1.2" height="1.2" fill="#6a6a6a"/></svg>
<div class="t" style="right:190px;text-align:right;top:332.5px;font-size:12px;line-height:12px;color:#d8d8d8;font-weight:normal;">Mode</div>
<div style="left:1373px;top:329.7px;width:105.3px;height:17.2px;background:#1e1e1e;border-radius:4px;"></div>
<div class="t" style="left:1381px;top:332.5px;font-size:12px;line-height:12px;color:#e0e0e0;font-weight:normal;">Material</div>
<svg style="position:absolute;left:1467.5px;top:336px;" width="9" height="6" viewBox="0 0 9 6"><path d="M0.8 1 L4.5 4.7 L8.2 1" stroke="#cfcfcf" stroke-width="1.3" fill="none"/></svg>
<div style="left:1293.3px;top:365.6px;width:157px;height:57px;background:#282828;border-radius:4px;"></div>
<div style="left:1297.8px;top:370.3px;width:147.8px;height:18.1px;background:#545860;border-radius:3px;"></div>
<div style="left:1301px;top:371.5px;width:16px;height:15.5px;background:#fdc774;"></div>
<div class="t" style="left:1323.3px;top:373px;font-size:12px;line-height:12px;color:#e8e8e8;font-weight:normal;">DonutSurface</div>
<svg style="position:absolute;left:1303px;top:410px;" width="8" height="9" viewBox="0 0 8 9"><path d="M1 0.5 L7 4.5 L1 8.5 Z" fill="#c8c8c8"/></svg>
<svg style="position:absolute;left:1375.5px;top:412px;" width="13" height="6" viewBox="0 0 13 6"><rect x="0.0" y="0.0" width="1.2" height="1.2" fill="#8a8a8a"/><rect x="0.0" y="2.5" width="1.2" height="1.2" fill="#8a8a8a"/><rect x="2.5" y="0.0" width="1.2" height="1.2" fill="#8a8a8a"/><rect x="2.5" y="2.5" width="1.2" height="1.2" fill="#8a8a8a"/><rect x="5.0" y="0.0" width="1.2" height="1.2" fill="#8a8a8a"/><rect x="5.0" y="2.5" width="1.2" height="1.2" fill="#8a8a8a"/><rect x="7.5" y="0.0" width="1.2" height="1.2" fill="#8a8a8a"/><rect x="7.5" y="2.5" width="1.2" height="1.2" fill="#8a8a8a"/><rect x="10.0" y="0.0" width="1.2" height="1.2" fill="#8a8a8a"/><rect x="10.0" y="2.5" width="1.2" height="1.2" fill="#8a8a8a"/></svg>
<div style="left:1460.8px;top:365.6px;width:17.4px;height:17.2px;background:#282828;border-radius:3px;"></div>
<svg style="position:absolute;left:1463.5px;top:368px;" width="12" height="12" viewBox="0 0 12 12"><path d="M6 1 V11 M1 6 H11" stroke="#e0e0e0" stroke-width="1.4"/></svg>
<div style="left:1293.3px;top:441.5px;width:185px;height:18px;background:#545454;border-radius:4px;"></div>
<svg style="position:absolute;left:1296px;top:442px;" width="16" height="17" viewBox="0 0 16 17"><path d="M3 15.5 H13.5 V7 L9 2.5 H3 Z" stroke="#d8d8d8" stroke-width="1.1" fill="none" transform="translate(16,0) scale(-1,1)"/><path d="M9 13 L6.5 10.5 M6.5 10.5 V13 M6.5 10.5 H9" stroke="#d8d8d8" stroke-width="1.1" fill="none"/></svg>
<div class="t" style="left:1195px;width:400px;text-align:center;top:445px;font-size:12px;line-height:12px;color:#e0e0e0;font-weight:normal;">Save All Images</div>
<div style="left:1284px;top:470.7px;width:203.5px;height:180.00000000000006px;background:#3d3d3d;border-radius:5px;"></div>
<svg style="position:absolute;left:1292px;top:479.7px;" width="10" height="8" viewBox="0 0 10 8"><path d="M1 1.5 L5 5.5 L9 1.5" stroke="#cfcfcf" stroke-width="1.2" fill="none"/></svg>
<div class="t" style="left:1306.5px;top:477.2px;font-size:12px;line-height:12px;color:#e0e0e0;font-weight:normal;">Brushes</div>
<svg style="position:absolute;left:1471px;top:480.7px;" width="13" height="6" viewBox="0 0 13 6"><rect x="0.0" y="0.0" width="1.2" height="1.2" fill="#6a6a6a"/><rect x="0.0" y="2.5" width="1.2" height="1.2" fill="#6a6a6a"/><rect x="2.5" y="0.0" width="1.2" height="1.2" fill="#6a6a6a"/><rect x="2.5" y="2.5" width="1.2" height="1.2" fill="#6a6a6a"/><rect x="5.0" y="0.0" width="1.2" height="1.2" fill="#6a6a6a"/><rect x="5.0" y="2.5" width="1.2" height="1.2" fill="#6a6a6a"/><rect x="7.5" y="0.0" width="1.2" height="1.2" fill="#6a6a6a"/><rect x="7.5" y="2.5" width="1.2" height="1.2" fill="#6a6a6a"/><rect x="10.0" y="0.0" width="1.2" height="1.2" fill="#6a6a6a"/><rect x="10.0" y="2.5" width="1.2" height="1.2" fill="#6a6a6a"/></svg>
<div style="left:1293px;top:504px;width:157px;height:118px;background:#282828;border-radius:4px 4px 0 0"></div>
<svg style="position:absolute;left:1320px;top:511px;" width="104" height="104" viewBox="0 0 104 104"><defs><radialGradient id="sph" cx="0.4" cy="0.35" r="0.7"><stop offset="0" stop-color="#5a5a5a"/><stop offset="0.6" stop-color="#3a3a3a"/><stop offset="1" stop-color="#303030"/></radialGradient><radialGradient id="sph2" cx="0.5" cy="0.5" r="0.5"><stop offset="0.78" stop-color="#8a9098" stop-opacity="0"/><stop offset="0.97" stop-color="#8a9098" stop-opacity="0.4"/><stop offset="1" stop-color="#8a9098" stop-opacity="0.2"/></radialGradient><radialGradient id="hl" cx="0.5" cy="0.5" r="0.5"><stop offset="0" stop-color="#c0c0c0" stop-opacity="0.6"/><stop offset="1" stop-color="#c0c0c0" stop-opacity="0"/></radialGradient><linearGradient id="sq" x1="0" y1="0" x2="1" y2="1"><stop offset="0" stop-color="#e8e8e8"/><stop offset="1" stop-color="#a8a8a8"/></linearGradient></defs><circle cx="51.4" cy="52.3" r="49.3" fill="url(#sph)"/><circle cx="51.4" cy="52.3" r="49.3" fill="url(#sph2)"/><circle cx="37" cy="17" r="9" fill="url(#hl)"/><path d="M44.6 22.5 L28.5 56 L59.5 35 L44.6 69.6 L71.9 49.8 L63.2 78.3" stroke="#1e1e1e" stroke-opacity="0.35" stroke-width="13.5" fill="none" stroke-linecap="round" stroke-linejoin="round" transform="translate(0.8,1.2)"/><path d="M44.6 22.5 L28.5 56 L59.5 35 L44.6 69.6 L71.9 49.8 L63.2 78.3" stroke="url(#sq)" stroke-width="11.5" fill="none" stroke-linecap="round" stroke-linejoin="round"/></svg>
<div style="left:1293px;top:623.5px;width:73.4px;height:18.4px;background:#1d1d1d;border-radius:0 0 0 4px"></div>
<div class="t" style="left:1300px;top:627px;font-size:12px;line-height:12px;color:#e0e0e0;font-weight:normal;">TexDraw</div>
<div style="left:1366.4px;top:623.5px;width:24.2px;height:18.4px;background:#4f4f4f;"></div>
<div class="t" style="left:1178.5px;width:400px;text-align:center;top:627px;font-size:12px;line-height:12px;color:#e0e0e0;font-weight:normal;">2</div>
<div style="left:1390.6px;top:623.5px;width:20px;height:18.4px;background:#4772b3;"></div>
<svg style="position:absolute;left:1393px;top:625px;" width="15" height="15" viewBox="0 0 15 15"><path d="M7.5 1 L13 3 V7.5 C13 10.5 10.5 12.5 7.5 14 C4.5 12.5 2 10.5 2 7.5 V3 Z" fill="#f0f0f0"/><path d="M4.8 7.5 L6.8 9.5 L10.3 5.5" stroke="#4772b3" stroke-width="1.5" fill="none"/></svg>
<div style="left:1410.6px;top:623.5px;width:20px;height:18.4px;background:#4f4f4f;"></div>
<svg style="position:absolute;left:1412.5px;top:625px;" width="16" height="16" viewBox="0 0 16 16"><path d="M5 4.5 H1.8 V14.2 H11.5 V11" stroke="#d8d8d8" stroke-width="1.1" fill="none"/><path d="M5.3 1.3 H11.3 L14.7 4.7 V10.7 H5.3 Z" stroke="#d8d8d8" stroke-width="1.1" fill="none"/><path d="M11 1.3 L14.7 5 H11 Z" fill="#d8d8d8"/></svg>
<div style="left:1430.6px;top:623.5px;width:19.4px;height:18.4px;background:#4f4f4f;border-radius:0 0 4px 0"></div>
<svg style="position:absolute;left:1432.5px;top:625px;" width="16" height="16" viewBox="0 0 16 16"><path d="M4 4 L12 12 M12 4 L4 12" stroke="#d6d6d6" stroke-width="1.2"/></svg>
<div style="left:1390.1px;top:623.5px;width:1px;height:18.4px;background:#3a3a3a;"></div>
<div style="left:1410.1px;top:623.5px;width:1px;height:18.4px;background:#3a3a3a;"></div>
<div style="left:1430.1px;top:623.5px;width:1px;height:18.4px;background:#3a3a3a;"></div>
<div style="left:1460.7px;top:504.7px;width:17.6px;height:17.2px;background:#1e1e1e;border-radius:3px;"></div>
<svg style="position:absolute;left:1465.0px;top:510px;" width="9" height="6" viewBox="0 0 9 6"><path d="M0.8 1 L4.5 4.7 L8.2 1" stroke="#cfcfcf" stroke-width="1.3" fill="none"/></svg>
<div style="left:1460.7px;top:527px;width:17.6px;height:17px;background:#4a4a4a;border-radius:3px;"></div>
<svg style="position:absolute;left:1462px;top:528px;" width="15" height="15" viewBox="0 0 15 15"><rect x="1.5" y="1.5" width="12" height="12" stroke="#e6e6e6" stroke-width="1.1" fill="none"/><path d="M1.5 13.5 L6 7 L10 13.5 Z" fill="#e6e6e6"/><circle cx="10.5" cy="4.5" r="1.2" fill="#e6e6e6"/></svg>
<div style="left:1284px;top:653.8px;width:203.5px;height:186.20000000000005px;background:#3d3d3d;border-radius:5px;"></div>
<svg style="position:absolute;left:1292px;top:662.8px;" width="10" height="8" viewBox="0 0 10 8"><path d="M1 1.5 L5 5.5 L9 1.5" stroke="#cfcfcf" stroke-width="1.2" fill="none"/></svg>
<div class="t" style="left:1306.5px;top:660.3px;font-size:12px;line-height:12px;color:#e0e0e0;font-weight:normal;">Brush Settings</div>
<svg style="position:absolute;left:1471px;top:663.8px;" width="13" height="6" viewBox="0 0 13 6"><rect x="0.0" y="0.0" width="1.2" height="1.2" fill="#6a6a6a"/><rect x="0.0" y="2.5" width="1.2" height="1.2" fill="#6a6a6a"/><rect x="2.5" y="0.0" width="1.2" height="1.2" fill="#6a6a6a"/><rect x="2.5" y="2.5" width="1.2" height="1.2" fill="#6a6a6a"/><rect x="5.0" y="0.0" width="1.2" height="1.2" fill="#6a6a6a"/><rect x="5.0" y="2.5" width="1.2" height="1.2" fill="#6a6a6a"/><rect x="7.5" y="0.0" width="1.2" height="1.2" fill="#6a6a6a"/><rect x="7.5" y="2.5" width="1.2" height="1.2" fill="#6a6a6a"/><rect x="10.0" y="0.0" width="1.2" height="1.2" fill="#6a6a6a"/><rect x="10.0" y="2.5" width="1.2" height="1.2" fill="#6a6a6a"/></svg>
<div class="t" style="right:190px;text-align:right;top:690px;font-size:12px;line-height:12px;color:#d8d8d8;font-weight:normal;">Blend</div>
<div style="left:1372.4px;top:687.4px;width:106px;height:17.4px;background:#1e1e1e;border-radius:4px;"></div>
<div class="t" style="left:1380px;top:690px;font-size:12px;line-height:12px;color:#e0e0e0;font-weight:normal;">Mix</div>
<svg style="position:absolute;left:1467.5px;top:694px;" width="9" height="6" viewBox="0 0 9 6"><path d="M0.8 1 L4.5 4.7 L8.2 1" stroke="#cfcfcf" stroke-width="1.3" fill="none"/></svg>
<div class="t" style="right:190px;text-align:right;top:720.5px;font-size:12px;line-height:12px;color:#d8d8d8;font-weight:normal;">Radius</div>
<div style="left:1372.4px;top:717.6px;width:66.4px;height:18px;background:#555555;border-radius:4px 0 0 4px"></div>
<div style="left:1372.4px;top:717.6px;width:15.4px;height:18px;background:#4772b3;border-radius:4px 0 0 4px"></div>
<div class="t" style="left:1205.5px;width:400px;text-align:center;top:720.5px;font-size:12px;line-height:12px;color:#e6e6e6;font-weight:normal;">132 px</div>
<div style="left:1438.8px;top:717.6px;width:19.5px;height:18px;background:#474747;"></div>
<svg style="position:absolute;left:1440px;top:718px;" width="18" height="18" viewBox="0 0 18 18"><path d="M7.2 10.2 L8.4 7.4 L14.2 1.6 L17 4.2 L11.2 10 Z" fill="#e8e8e8"/><path d="M6.6 6.6 A3.3 3.3 0 1 0 10 10.6" stroke="#b0b0b0" stroke-width="1.2" fill="none"/><path d="M6.2 4.2 A5.4 5.4 0 1 0 12.3 11" stroke="#b0b0b0" stroke-width="1.2" fill="none"/></svg>
<div style="left:1458.3px;top:717.6px;width:20.1px;height:18px;background:#4772b3;border-radius:0 4px 4px 0"></div>
<svg style="position:absolute;left:1460.5px;top:719px;" width="16" height="16" viewBox="0 0 16 16"><path d="M2 2 H8 V6 H6.5 V13 H3.5 V6 H2 Z" fill="#f0f0f0"/><path d="M3 3.5 H7" stroke="#4772b3" stroke-width="0.8"/><path d="M12 2 V10 Q14 11 13 14 Q11 15 10 13 Q10 11 12 10" fill="#f0f0f0"/></svg>
<div class="t" style="right:190px;text-align:right;top:742.5px;font-size:12px;line-height:12px;color:#d8d8d8;font-weight:normal;">Strength</div>
<div style="left:1372.4px;top:739.6px;width:66.4px;height:17.8px;background:#4772b3;border-radius:4px 0 0 4px"></div>
<div class="t" style="left:1205.5px;width:400px;text-align:center;top:742.5px;font-size:12px;line-height:12px;color:#f0f0f0;font-weight:normal;">1.000</div>
<div style="left:1438.8px;top:739.6px;width:19.5px;height:17.8px;background:#4772b3;"></div>
<div style="left:1438.3px;top:739.6px;width:1px;height:17.8px;background:#3a5a8a;"></div>
<svg style="position:absolute;left:1440px;top:740px;" width="18" height="18" viewBox="0 0 18 18"><path d="M7.2 10.2 L8.4 7.4 L14.2 1.6 L17 4.2 L11.2 10 Z" fill="#e8e8e8"/><path d="M6.6 6.6 A3.3 3.3 0 1 0 10 10.6" stroke="#b0b0b0" stroke-width="1.2" fill="none"/><path d="M6.2 4.2 A5.4 5.4 0 1 0 12.3 11" stroke="#b0b0b0" stroke-width="1.2" fill="none"/></svg>
<div style="left:1458.3px;top:739.6px;width:20.1px;height:17.8px;background:#474747;border-radius:0 4px 4px 0"></div>
<svg style="position:absolute;left:1460.5px;top:741px;" width="16" height="16" viewBox="0 0 16 16"><path d="M2 2 H8 V6 H6.5 V13 H3.5 V6 H2 Z" fill="#d8d8d8"/><path d="M3 3.5 H7" stroke="#4772b3" stroke-width="0.8"/><path d="M12 2 V10 Q14 11 13 14 Q11 15 10 13 Q10 11 12 10" fill="#d8d8d8"/></svg>
<svg style="position:absolute;left:1306px;top:783px;" width="10" height="8" viewBox="0 0 10 8"><path d="M1 1.5 L5 5.5 L9 1.5" stroke="#cfcfcf" stroke-width="1.2" fill="none"/></svg>
<div class="t" style="left:1320.2px;top:781px;font-size:12px;line-height:12px;color:#e0e0e0;font-weight:normal;">Color Picker</div>
<div style="left:1284px;top:799.4px;width:203.5px;height:40px;background:#363636;"></div>
<div style="left:1293px;top:808.4px;width:91.7px;height:18.3px;background:#4772b3;border-radius:4px 0 0 4px"></div>
<div style="left:1384.7px;top:808.4px;width:93.7px;height:18.3px;background:#545454;border-radius:0 4px 4px 0"></div>
<div class="t" style="left:1138.8px;width:400px;text-align:center;top:811.5px;font-size:12px;line-height:12px;color:#f0f0f0;font-weight:normal;">Color</div>
<div class="t" style="left:1231.5px;width:400px;text-align:center;top:811.5px;font-size:12px;line-height:12px;color:#e0e0e0;font-weight:normal;">Gradient</div>
</div></div>
<div style="position:absolute;left:638px;top:93px;width:607px;height:739px;overflow:hidden;border-radius:7px"><div style="position:absolute;left:-638px;top:-93px;width:1552px;height:927px">
<svg style="position:absolute;left:637px;top:93px;" width="608" height="739" viewBox="0 0 608 739"><g transform="translate(-637,-93)"><path d="M637 229 Q800 218 950 216 Q1100 214 1245 222" stroke="#3e3e3e" stroke-width="1" fill="none"/><path d="M637 200 Q950 195 1245 200 M637 185 Q950 181 1245 185" stroke="#3c3c3c" stroke-width="1" fill="none"/><path d="M822 119.5 L871 143.6 L905.6 154.2 L950 158.5 L994.6 154.2 L1028 143.6 L1076 120" stroke="#1c1c1c" stroke-width="1.4" fill="none"/><path d="M950 158.5 L950 214" stroke="#2a2a2a" stroke-width="1"/><path d="M638 312 L1245 597" stroke="#6f9a2a" stroke-width="1.3"/><path d="M637 596 L1245 312" stroke="#a8404e" stroke-width="1.3"/></g></svg>
<div style="left:638px;top:93px;width:607px;height:52px;background:rgba(20,20,20,0.12);"></div>
<div style="left:646px;top:96.5px;width:30px;height:18px;background:#262626;border-radius:4px;box-sizing:border-box;border:1px solid #333"></div>
<svg style="position:absolute;left:649px;top:97px;" width="18" height="17" viewBox="0 0 18 17"><path d="M2 9 H14 M2 13 H14 M5 6 L3.5 16 M11 6 L10 16" stroke="#e0e0e0" stroke-width="1.3"/><circle cx="11" cy="5" r="3.8" fill="#e8e8e8"/><circle cx="10" cy="4" r="1.2" fill="#9a9a9a"/></svg>
<svg style="position:absolute;left:665.5px;top:103px;" width="9" height="6" viewBox="0 0 9 6"><path d="M0.8 1 L4.5 4.7 L8.2 1" stroke="#cfcfcf" stroke-width="1.3" fill="none"/></svg>
<div style="left:683px;top:96.5px;width:108px;height:18px;background:#262626;border-radius:4px;box-sizing:border-box;border:1px solid #333"></div>
<svg style="position:absolute;left:688px;top:98.5px" width="14" height="15" viewBox="0 0 14 15" shape-rendering="crispEdges"><rect x="0.0" y="0.0" width="3.5" height="2.6" fill="#e6e6e6"/><rect x="0.0" y="5.2" width="3.5" height="2.6" fill="#e6e6e6"/><rect x="3.5" y="2.6" width="3.5" height="2.6" fill="#e6e6e6"/><rect x="7.0" y="0.0" width="3.5" height="2.6" fill="#e6e6e6"/><rect x="7.0" y="5.2" width="3.5" height="2.6" fill="#e6e6e6"/><rect x="10.5" y="2.6" width="3.5" height="2.6" fill="#e6e6e6"/><path d="M0 8.6 H14 V11 H10 V14.5 H7 V11 H4.5 V13.5 H1.5 V11 H0 Z" fill="#9a9a9a"/></svg>
<div class="t" style="left:709px;top:99px;font-size:12px;line-height:12px;color:#dcdcdc;font-weight:normal;">Texture Paint</div>
<svg style="position:absolute;left:781.0px;top:103px;" width="9" height="6" viewBox="0 0 9 6"><path d="M0.8 1 L4.5 4.7 L8.2 1" stroke="#cfcfcf" stroke-width="1.3" fill="none"/></svg>
<div style="left:797.7px;top:96.5px;width:18.3px;height:18.5px;background:#4a4a4a;border-radius:4px;"></div>
<svg style="position:absolute;left:799px;top:98px;" width="16" height="16" viewBox="0 0 16 16"><rect x="2" y="5" width="9" height="9" fill="#e8e8e8"/><path d="M5 2 H14 V11" stroke="#c8c8c8" stroke-width="1.1" fill="none"/><path d="M11 5 L14 2" stroke="#c8c8c8" stroke-width="1"/></svg>
<div class="t" style="left:829.5px;top:99px;font-size:12px;line-height:12px;color:#d0d0d0;font-weight:normal;">View</div>
<div style="left:989.6px;top:96.3px;width:30px;height:18.3px;background:#262626;border-radius:4px;"></div>
<svg style="position:absolute;left:991px;top:97px;" width="18" height="17" viewBox="0 0 18 17"><path d="M4 9 Q11 2 18 9 Q11 15 4 9 Z" fill="#e8e8e8" transform="translate(-1,-3)"/><circle cx="10" cy="6" r="1.7" fill="#262626"/><path d="M2 8 L8.5 11 L5.5 12 L4.5 16 Z" fill="#e8e8e8"/></svg>
<svg style="position:absolute;left:1009.0px;top:103px;" width="9" height="6" viewBox="0 0 9 6"><path d="M0.8 1 L4.5 4.7 L8.2 1" stroke="#cfcfcf" stroke-width="1.3" fill="none"/></svg>
<div style="left:1026.6px;top:96.3px;width:37.8px;height:18.3px;background:#262626;border-radius:4px;"></div>
<div style="left:1026.6px;top:96.3px;width:18.1px;height:18.3px;background:#4772b3;border-radius:4px 0 0 4px"></div>
<svg style="position:absolute;left:1027px;top:97px;" width="17" height="17" viewBox="0 0 17 17"><path d="M2 5 Q10 5 12 15" stroke="#f0f0f0" stroke-width="1.3" fill="none"/><circle cx="4" cy="14" r="1.8" stroke="#f0f0f0" stroke-width="1.2" fill="none"/><path d="M5.5 12.5 L14 4 M10 3.5 H14.5 V8" stroke="#f0f0f0" stroke-width="1.3" fill="none"/></svg>
<svg style="position:absolute;left:1050.0px;top:103px;" width="9" height="6" viewBox="0 0 9 6"><path d="M0.8 1 L4.5 4.7 L8.2 1" stroke="#cfcfcf" stroke-width="1.3" fill="none"/></svg>
<div style="left:1071.7px;top:96.3px;width:37.4px;height:18.3px;background:#262626;border-radius:4px;"></div>
<div style="left:1071.7px;top:96.3px;width:17.9px;height:18.3px;background:#4772b3;border-radius:4px 0 0 4px"></div>
<svg style="position:absolute;left:1072px;top:97px;" width="17" height="17" viewBox="0 0 17 17"><circle cx="6.8" cy="11" r="4.6" stroke="#f0f0f0" stroke-width="1.3" fill="none"/><circle cx="10.2" cy="7.2" r="5.6" fill="#f0f0f0" stroke="#4772b3" stroke-width="1.2"/><path d="M6.5 8.5 Q8.5 11.5 12.5 10.5 M9 5.5 L11 7.5" stroke="#4772b3" stroke-width="1.1" fill="none"/></svg>
<svg style="position:absolute;left:1095.0px;top:103px;" width="9" height="6" viewBox="0 0 9 6"><path d="M0.8 1 L4.5 4.7 L8.2 1" stroke="#cfcfcf" stroke-width="1.3" fill="none"/></svg>
<div style="left:1116.6px;top:96.3px;width:18px;height:18.3px;background:#3d3d3d;border-radius:4px;"></div>
<svg style="position:absolute;left:1117.5px;top:97px;" width="16" height="17" viewBox="0 0 16 17"><rect x="2" y="5" width="10" height="10" stroke="#d8d8d8" stroke-width="1.2" fill="none"/><path d="M5 5 V2 H15 V12 H12" stroke="#d8d8d8" stroke-width="1.2" fill="none"/><rect x="5" y="9" width="1.2" height="1.2" fill="#d8d8d8"/><rect x="8" y="11" width="1.2" height="1.2" fill="#d8d8d8"/></svg>
<div style="left:1141.4px;top:96.3px;width:94.7px;height:18.3px;background:#262626;border-radius:4px;"></div>
<div style="left:1141.4px;top:96.3px;width:17.8px;height:18.3px;background:#474747;border-radius:4px 0 0 4px"></div>
<div style="left:1159.2px;top:96.3px;width:19.1px;height:18.3px;background:#4772b3;"></div>
<div style="left:1178.3px;top:96.3px;width:19.2px;height:18.3px;background:#474747;"></div>
<div style="left:1197.5px;top:96.3px;width:19.5px;height:18.3px;background:#474747;"></div>
<svg style="position:absolute;left:1142px;top:97px;" width="17" height="17" viewBox="0 0 17 17"><circle cx="8.5" cy="8.5" r="6.5" stroke="#d8d8d8" stroke-width="1.2" fill="none"/><ellipse cx="8.5" cy="8.5" rx="3" ry="6.5" stroke="#d8d8d8" stroke-width="1.1" fill="none"/><path d="M2 6.5 H15 M2 10.5 H15" stroke="#d8d8d8" stroke-width="1.1"/></svg>
<svg style="position:absolute;left:1160px;top:97px;" width="17" height="17" viewBox="0 0 17 17"><circle cx="8.5" cy="8.5" r="6.8" fill="#f4f4f4"/></svg>
<svg style="position:absolute;left:1179.5px;top:97px;" width="17" height="17" viewBox="0 0 17 17"><circle cx="8.5" cy="8.5" r="6.5" stroke="#d8d8d8" stroke-width="1.2" fill="#474747"/><path d="M8.5 2 V8.5 L13.5 12.5 A6.5 6.5 0 0 1 2 8.5 A6.5 6.5 0 0 1 8.5 2 Z" fill="#d8d8d8"/></svg>
<svg style="position:absolute;left:1199px;top:97px;" width="17" height="17" viewBox="0 0 17 17"><circle cx="8.5" cy="8.5" r="6.5" stroke="#d8d8d8" stroke-width="1.2" fill="none"/><path d="M5 6 A4 4 0 0 1 9 4" stroke="#d8d8d8" stroke-width="1.2" fill="none"/></svg>
<svg style="position:absolute;left:1222.5px;top:103px;" width="9" height="6" viewBox="0 0 9 6"><path d="M0.8 1 L4.5 4.7 L8.2 1" stroke="#cfcfcf" stroke-width="1.3" fill="none"/></svg>
<div style="left:682px;top:122.8px;width:149.5px;height:19px;background:#282828;border-radius:4px;box-sizing:border-box;border:1px solid #353535"></div>
<div style="left:713px;top:123.8px;width:117.5px;height:17px;background:#1d1d1d;border-radius:0 3px 3px 0"></div>
<svg style="position:absolute;left:691px;top:125.8px;" width="14" height="14" viewBox="0 0 14 14"><defs><radialGradient id="bg682" cx="0.35" cy="0.3" r="0.8"><stop offset="0" stop-color="#9a9a9a"/><stop offset="0.6" stop-color="#4a4a4a"/><stop offset="1" stop-color="#202020"/></radialGradient></defs><circle cx="7" cy="7" r="6.5" fill="url(#bg682)"/><path d="M5 4 L6 8 L8 5 L9 9" stroke="#d0d0d0" stroke-width="1.4" fill="none"/></svg>
<div class="t" style="left:720.5px;top:125.30000000000001px;font-size:12px;line-height:12px;color:#dcdcdc;font-weight:normal;">TexDraw</div>
<div style="left:838.5px;top:122.8px;width:78px;height:18.3px;background:#7afc6e;border-radius:3px;"></div>
<div style="left:923.5px;top:122.6px;width:98.3px;height:18.8px;background:#262626;border-radius:4px;box-sizing:border-box;border:1px solid #333"></div>
<div class="t" style="left:932px;top:125.5px;font-size:12px;line-height:12px;color:#dcdcdc;font-weight:normal;">Mix</div>
<svg style="position:absolute;left:1011.5px;top:129.5px;" width="9" height="6" viewBox="0 0 9 6"><path d="M0.8 1 L4.5 4.7 L8.2 1" stroke="#cfcfcf" stroke-width="1.3" fill="none"/></svg>
<div style="left:1029.2px;top:122.7px;width:127.4px;height:18.5px;background:#555555;border-radius:4px;overflow:hidden"></div>
<div style="left:1029.2px;top:122.7px;width:31.2px;height:18.5px;background:#4772b3;border-radius:4px 0 0 4px"></div>
<div class="t" style="left:1039.7px;top:126.0px;font-size:12px;line-height:12px;color:#e6e6e6;font-weight:normal;">Radius</div>
<div class="t" style="right:403.39999999999986px;text-align:right;top:126.0px;font-size:12px;line-height:12px;color:#e6e6e6;font-weight:normal;">132 px</div>
<div style="left:1156.6px;top:122.7px;width:19.6px;height:18.5px;background:#474747;border-radius:0 4px 4px 0"></div>
<div style="left:1156.1px;top:122.7px;width:1px;height:18.5px;background:#3d3d3d;"></div>
<svg style="position:absolute;left:1158px;top:123px;" width="18" height="18" viewBox="0 0 18 18"><path d="M7.2 10.2 L8.4 7.4 L14.2 1.6 L17 4.2 L11.2 10 Z" fill="#e8e8e8"/><path d="M6.6 6.6 A3.3 3.3 0 1 0 10 10.6" stroke="#b0b0b0" stroke-width="1.2" fill="none"/><path d="M6.2 4.2 A5.4 5.4 0 1 0 12.3 11" stroke="#b0b0b0" stroke-width="1.2" fill="none"/></svg>
<div style="left:1183.2px;top:122.7px;width:70px;height:18.5px;background:#4772b3;border-radius:4px;"></div>
<div class="t" style="left:1193.6px;top:125.5px;font-size:12px;line-height:12px;color:#f0f0f0;font-weight:normal;">Strength</div>
<svg style="position:absolute;left:637px;top:93px;" width="608" height="739" viewBox="0 0 608 739"><defs>
<clipPath id="dclip"><path d="M774.4 473.4 C774.7 468.8 775.6 464.4 778.5 458.6 C781.4 452.8 787.5 443.8 792 438.4 C796.5 433.0 799.8 430.2 805.4 426.2 C811.0 422.1 819.6 417.5 825.7 414.1 C831.8 410.7 835.2 409.1 841.9 406 C848.6 402.9 858.7 398.0 866.1 395.2 C873.5 392.4 878.4 390.5 886.3 389.2 C894.2 387.9 903.5 387.6 913.3 387.1 C923.1 386.7 933.8 386.1 945 386.5 C956.2 386.9 968.9 387.8 980.4 389.8 C991.9 391.8 1003.4 396.2 1014.2 398.6 C1025.0 401.0 1036.2 401.2 1045.2 404 C1054.2 406.8 1062.0 410.8 1068.1 415.4 C1074.2 420.0 1077.8 426.4 1081.6 431.6 C1085.4 436.8 1088.5 441.3 1091 446.5 C1093.5 451.7 1095.1 457.4 1096.4 462.6 C1097.8 467.8 1098.9 472.3 1099.1 477.5 C1099.3 482.7 1098.3 490.1 1097.7 494 C1097.1 497.9 1095.6 498.0 1095.5 501 C1095.4 504.0 1097.2 508.3 1097.3 511.8 C1097.3 515.3 1096.8 517.9 1095.8 522 C1094.8 526.1 1092.9 531.7 1091.4 536.6 C1090.0 541.5 1089.3 546.4 1087.1 551.2 C1084.9 556.1 1082.2 561.6 1078.3 565.7 C1074.4 569.8 1069.9 572.0 1063.8 575.9 C1057.7 579.8 1050.4 584.9 1041.9 589 C1033.4 593.1 1022.5 597.3 1012.8 600.7 C1003.1 604.1 993.4 607.1 983.7 609.4 C974.0 611.7 963.6 614.0 954.6 614.5 C945.6 615.0 937.3 613.6 930 612.5 C922.7 611.4 918.7 610.0 910.6 608 C902.5 606.0 891.2 603.4 881.5 600.7 C871.8 598.0 861.6 595.1 852.4 591.9 C843.2 588.7 833.0 585.6 826.2 581.7 C819.4 577.8 816.2 574.2 811.6 568.6 C807.0 563.0 802.1 554.3 798.5 548.2 C794.9 542.1 792.1 536.7 789.8 532.2 C787.5 527.7 786.2 525.0 784.5 521 C782.8 517.0 780.5 512.0 779.5 508 C778.5 504.0 779.1 500.7 778.6 497 C778.1 493.3 777.2 489.9 776.5 486 C775.8 482.1 774.1 478.0 774.4 473.4 Z"/></clipPath>
<filter id="b2" filterUnits="userSpaceOnUse" x="637" y="93" width="608" height="739"><feGaussianBlur stdDeviation="2"/></filter>
<filter id="b4" filterUnits="userSpaceOnUse" x="637" y="93" width="608" height="739"><feGaussianBlur stdDeviation="4"/></filter>
<filter id="b7" filterUnits="userSpaceOnUse" x="637" y="93" width="608" height="739"><feGaussianBlur stdDeviation="7"/></filter>
<filter id="b12" filterUnits="userSpaceOnUse" x="637" y="93" width="608" height="739"><feGaussianBlur stdDeviation="12"/></filter>
<linearGradient id="dg" x1="0" y1="386" x2="0" y2="615" gradientUnits="userSpaceOnUse">
<stop offset="0" stop-color="#a6844e"/><stop offset="0.35" stop-color="#a8864f"/><stop offset="0.6" stop-color="#b08b55"/><stop offset="1" stop-color="#9c7a47"/></linearGradient>
</defs>
<g transform="translate(-637,-93)">
<path d="M774.4 473.4 C774.7 468.8 775.6 464.4 778.5 458.6 C781.4 452.8 787.5 443.8 792 438.4 C796.5 433.0 799.8 430.2 805.4 426.2 C811.0 422.1 819.6 417.5 825.7 414.1 C831.8 410.7 835.2 409.1 841.9 406 C848.6 402.9 858.7 398.0 866.1 395.2 C873.5 392.4 878.4 390.5 886.3 389.2 C894.2 387.9 903.5 387.6 913.3 387.1 C923.1 386.7 933.8 386.1 945 386.5 C956.2 386.9 968.9 387.8 980.4 389.8 C991.9 391.8 1003.4 396.2 1014.2 398.6 C1025.0 401.0 1036.2 401.2 1045.2 404 C1054.2 406.8 1062.0 410.8 1068.1 415.4 C1074.2 420.0 1077.8 426.4 1081.6 431.6 C1085.4 436.8 1088.5 441.3 1091 446.5 C1093.5 451.7 1095.1 457.4 1096.4 462.6 C1097.8 467.8 1098.9 472.3 1099.1 477.5 C1099.3 482.7 1098.3 490.1 1097.7 494 C1097.1 497.9 1095.6 498.0 1095.5 501 C1095.4 504.0 1097.2 508.3 1097.3 511.8 C1097.3 515.3 1096.8 517.9 1095.8 522 C1094.8 526.1 1092.9 531.7 1091.4 536.6 C1090.0 541.5 1089.3 546.4 1087.1 551.2 C1084.9 556.1 1082.2 561.6 1078.3 565.7 C1074.4 569.8 1069.9 572.0 1063.8 575.9 C1057.7 579.8 1050.4 584.9 1041.9 589 C1033.4 593.1 1022.5 597.3 1012.8 600.7 C1003.1 604.1 993.4 607.1 983.7 609.4 C974.0 611.7 963.6 614.0 954.6 614.5 C945.6 615.0 937.3 613.6 930 612.5 C922.7 611.4 918.7 610.0 910.6 608 C902.5 606.0 891.2 603.4 881.5 600.7 C871.8 598.0 861.6 595.1 852.4 591.9 C843.2 588.7 833.0 585.6 826.2 581.7 C819.4 577.8 816.2 574.2 811.6 568.6 C807.0 563.0 802.1 554.3 798.5 548.2 C794.9 542.1 792.1 536.7 789.8 532.2 C787.5 527.7 786.2 525.0 784.5 521 C782.8 517.0 780.5 512.0 779.5 508 C778.5 504.0 779.1 500.7 778.6 497 C778.1 493.3 777.2 489.9 776.5 486 C775.8 482.1 774.1 478.0 774.4 473.4 Z" fill="#2b2b2b" stroke="#2b2b2b" stroke-width="3" filter="url(#b2)" opacity="0.8"/>
<path d="M774.4 473.4 C774.7 468.8 775.6 464.4 778.5 458.6 C781.4 452.8 787.5 443.8 792 438.4 C796.5 433.0 799.8 430.2 805.4 426.2 C811.0 422.1 819.6 417.5 825.7 414.1 C831.8 410.7 835.2 409.1 841.9 406 C848.6 402.9 858.7 398.0 866.1 395.2 C873.5 392.4 878.4 390.5 886.3 389.2 C894.2 387.9 903.5 387.6 913.3 387.1 C923.1 386.7 933.8 386.1 945 386.5 C956.2 386.9 968.9 387.8 980.4 389.8 C991.9 391.8 1003.4 396.2 1014.2 398.6 C1025.0 401.0 1036.2 401.2 1045.2 404 C1054.2 406.8 1062.0 410.8 1068.1 415.4 C1074.2 420.0 1077.8 426.4 1081.6 431.6 C1085.4 436.8 1088.5 441.3 1091 446.5 C1093.5 451.7 1095.1 457.4 1096.4 462.6 C1097.8 467.8 1098.9 472.3 1099.1 477.5 C1099.3 482.7 1098.3 490.1 1097.7 494 C1097.1 497.9 1095.6 498.0 1095.5 501 C1095.4 504.0 1097.2 508.3 1097.3 511.8 C1097.3 515.3 1096.8 517.9 1095.8 522 C1094.8 526.1 1092.9 531.7 1091.4 536.6 C1090.0 541.5 1089.3 546.4 1087.1 551.2 C1084.9 556.1 1082.2 561.6 1078.3 565.7 C1074.4 569.8 1069.9 572.0 1063.8 575.9 C1057.7 579.8 1050.4 584.9 1041.9 589 C1033.4 593.1 1022.5 597.3 1012.8 600.7 C1003.1 604.1 993.4 607.1 983.7 609.4 C974.0 611.7 963.6 614.0 954.6 614.5 C945.6 615.0 937.3 613.6 930 612.5 C922.7 611.4 918.7 610.0 910.6 608 C902.5 606.0 891.2 603.4 881.5 600.7 C871.8 598.0 861.6 595.1 852.4 591.9 C843.2 588.7 833.0 585.6 826.2 581.7 C819.4 577.8 816.2 574.2 811.6 568.6 C807.0 563.0 802.1 554.3 798.5 548.2 C794.9 542.1 792.1 536.7 789.8 532.2 C787.5 527.7 786.2 525.0 784.5 521 C782.8 517.0 780.5 512.0 779.5 508 C778.5 504.0 779.1 500.7 778.6 497 C778.1 493.3 777.2 489.9 776.5 486 C775.8 482.1 774.1 478.0 774.4 473.4 Z" fill="url(#dg)" stroke="#3a3024" stroke-width="1.2"/>
<g clip-path="url(#dclip)">
<path d="M774.4 473.4 C774.7 468.8 775.6 464.4 778.5 458.6 C781.4 452.8 787.5 443.8 792 438.4 C796.5 433.0 799.8 430.2 805.4 426.2 C811.0 422.1 819.6 417.5 825.7 414.1 C831.8 410.7 835.2 409.1 841.9 406 C848.6 402.9 858.7 398.0 866.1 395.2 C873.5 392.4 878.4 390.5 886.3 389.2 C894.2 387.9 903.5 387.6 913.3 387.1 C923.1 386.7 933.8 386.1 945 386.5 C956.2 386.9 968.9 387.8 980.4 389.8 C991.9 391.8 1003.4 396.2 1014.2 398.6 C1025.0 401.0 1036.2 401.2 1045.2 404 C1054.2 406.8 1062.0 410.8 1068.1 415.4 C1074.2 420.0 1077.8 426.4 1081.6 431.6 C1085.4 436.8 1088.5 441.3 1091 446.5 C1093.5 451.7 1095.1 457.4 1096.4 462.6 C1097.8 467.8 1098.9 472.3 1099.1 477.5 C1099.3 482.7 1098.3 490.1 1097.7 494 C1097.1 497.9 1095.6 498.0 1095.5 501 C1095.4 504.0 1097.2 508.3 1097.3 511.8 C1097.3 515.3 1096.8 517.9 1095.8 522 C1094.8 526.1 1092.9 531.7 1091.4 536.6 C1090.0 541.5 1089.3 546.4 1087.1 551.2 C1084.9 556.1 1082.2 561.6 1078.3 565.7 C1074.4 569.8 1069.9 572.0 1063.8 575.9 C1057.7 579.8 1050.4 584.9 1041.9 589 C1033.4 593.1 1022.5 597.3 1012.8 600.7 C1003.1 604.1 993.4 607.1 983.7 609.4 C974.0 611.7 963.6 614.0 954.6 614.5 C945.6 615.0 937.3 613.6 930 612.5 C922.7 611.4 918.7 610.0 910.6 608 C902.5 606.0 891.2 603.4 881.5 600.7 C871.8 598.0 861.6 595.1 852.4 591.9 C843.2 588.7 833.0 585.6 826.2 581.7 C819.4 577.8 816.2 574.2 811.6 568.6 C807.0 563.0 802.1 554.3 798.5 548.2 C794.9 542.1 792.1 536.7 789.8 532.2 C787.5 527.7 786.2 525.0 784.5 521 C782.8 517.0 780.5 512.0 779.5 508 C778.5 504.0 779.1 500.7 778.6 497 C778.1 493.3 777.2 489.9 776.5 486 C775.8 482.1 774.1 478.0 774.4 473.4 Z" fill="none" stroke="#6a5030" stroke-width="10" filter="url(#b7)" opacity="0.55"/>
<path d="M830 425 Q870 440 905 460 Q935 470 1000 452 Q1040 440 1070 418" stroke="#7a5e36" stroke-width="14" fill="none" filter="url(#b7)" opacity="0.35"/>
<ellipse cx="915" cy="455" rx="28" ry="9" fill="#5a4428" filter="url(#b4)" opacity="0.45"/><ellipse cx="906" cy="457" rx="8" ry="4" fill="#3a2c18" filter="url(#b2)" opacity="0.55"/>
<path d="M845 428 Q880 440 906 458" stroke="#6a5030" stroke-width="12" fill="none" filter="url(#b7)" opacity="0.35"/><path d="M895 420 Q905 440 908 458" stroke="#5a4428" stroke-width="6" fill="none" filter="url(#b4)" opacity="0.3"/>
<path d="M912 460 Q950 462 990 452" stroke="#5a4428" stroke-width="3" fill="none" filter="url(#b2)" opacity="0.5"/>
<ellipse cx="960" cy="428" rx="11" ry="26" fill="#d2b482" filter="url(#b7)" opacity="0.75"/>
<ellipse cx="838" cy="519" rx="18" ry="14" fill="#c8a878" filter="url(#b7)" opacity="0.6"/>
<path d="M784 499 Q805 526 852 551 Q900 564 945 564 Q1012 555 1093 503" stroke="#4e3b22" stroke-width="3" fill="none" filter="url(#b2)" opacity="0.7"/>
<path d="M800 540 Q840 570 880 576 Q945 582 1013 575 Q1060 560 1086 534" stroke="#5a4428" stroke-width="4" fill="none" filter="url(#b4)" opacity="0.6"/>
<path d="M853 512 C870 497 910 488 950 489 C985 492 1006 512 1006 540 C1006 572 990 600 955 610 C925 615 898 606 872 592 C853 580 842 560 844 540 C845 528 848 519 853 512 Z" fill="#55ae4b" filter="url(#b7)"/>
<ellipse cx="905" cy="530" rx="48" ry="16" fill="#7ac874" filter="url(#b7)" opacity="0.45"/><ellipse cx="885" cy="536" rx="22" ry="9" fill="#8ad584" filter="url(#b4)" opacity="0.45"/>
<path d="M842 547 Q900 566 950 565 Q990 563 1012 555" stroke="#2f6a2a" stroke-width="4.5" fill="none" filter="url(#b2)" opacity="0.7"/>
<path d="M852 569 Q910 583 950 581 Q985 579 1008 571" stroke="#336f2e" stroke-width="4.5" fill="none" filter="url(#b4)" opacity="0.55"/>
</g>
<path d="M783 527 L805 517.6" stroke="#a8404e" stroke-width="1.3"/><path d="M1076.5 518.6 L1098 528.8" stroke="#6f9a2a" stroke-width="1.3"/><path d="M920 462.6 L972 439.3" stroke="#a8404e" stroke-width="1.3"/>
<path d="M917.3 442.8 L961 463.8" stroke="#6f9a2a" stroke-width="1.3"/>
<circle cx="950.2" cy="554.4" r="66" stroke="#f2f2f2" stroke-width="1.5" fill="none"/>
</g></svg>
<svg style="position:absolute;left:637px;top:93px;" width="608" height="739" viewBox="0 0 608 739"><g transform="translate(-637,-93)"><path d="M789.8 275.8 L865 177.5" stroke="#e8412c" stroke-width="2.6"/><path d="M873.7 165.9 L869.4 181.6 L859.8 174.3 Z" fill="#e8412c"/><path d="M879 700.4 Q875.5 662 884.5 636.5" stroke="#e8412c" stroke-width="2.6" fill="none"/><path d="M891.2 627 L889.4 641 L878.6 633.6 Z" fill="#e8412c"/></g></svg>
<div style="left:645.5px;top:153px;width:40.8px;height:33.7px;background:#4772b3;border-radius:4px 4px 0 0;"></div>
<div style="left:645.5px;top:186.7px;width:40.8px;height:34.9px;background:#282828;"></div>
<div style="left:645.5px;top:222.6px;width:40.8px;height:33.9px;background:#282828;"></div>
<div style="left:645.5px;top:257.5px;width:40.8px;height:34.2px;background:#282828;"></div>
<div style="left:645.5px;top:292.7px;width:40.8px;height:34.2px;background:#282828;"></div>
<div style="left:645.5px;top:327.9px;width:40.8px;height:33.5px;background:#282828;border-radius:0 0 4px 4px;"></div>
<div style="left:645.5px;top:368.7px;width:40.8px;height:32.6px;background:#282828;border-radius:4px;"></div>
<svg style="position:absolute;left:645.5px;top:153px;" width="41" height="34" viewBox="0 0 41 34"><path d="M28.8 8.2 L26.6 6.8 L16 16.8 L18.3 18.8 Z" fill="#e4e4e4"/><path d="M28.8 8.2 Q28.5 6.5 26.6 6.8" fill="#e4e4e4"/><ellipse cx="13.6" cy="20.8" rx="5" ry="3.2" transform="rotate(-38 13.6 20.8)" fill="#e4e4e4"/><path d="M10.5 25.5 Q14 22.5 19 23.2 Q23 24 26.5 22" stroke="#9c9c9c" stroke-width="2.2" fill="none" stroke-linecap="round"/></svg>
<svg style="position:absolute;left:645.5px;top:186.7px;" width="41" height="35" viewBox="0 0 41 35"><path d="M11.8 18.5 Q11 26.5 19 26 Q25.5 25.5 27 19.5 L24.3 20.3 Q22.5 23.3 19 23.3 Q14.5 23.3 14 19 Z" fill="#9c9c9c"/><path d="M19 8 C16.5 11.5 13.8 14.5 13.8 17.5 A5.2 5.2 0 0 0 24.2 17.5 C24.2 14.5 21.5 11.5 19 8 Z" fill="#e4e4e4"/></svg>
<svg style="position:absolute;left:645.5px;top:222.6px;" width="41" height="34" viewBox="0 0 41 34"><ellipse cx="19.5" cy="25" rx="6.2" ry="1.6" fill="#9c9c9c"/><path d="M15 10.5 L17.5 8 L21 7.2 L24 8.2 L25.6 11 L25.4 15.5 L24.8 20.8 L22.3 18.6 L21 20 L19 17.5 L17 15.8 L17.8 14.5 L15.8 13.6 L16.6 12.2 Z" fill="#e4e4e4"/><path d="M12.2 23.2 L19.5 16.2" stroke="#e4e4e4" stroke-width="2.3" stroke-linecap="round"/></svg>
<svg style="position:absolute;left:645.5px;top:257.5px;" width="41" height="34" viewBox="0 0 41 34"><circle cx="19" cy="9.8" r="3" fill="#e4e4e4"/><rect x="17.6" y="11" width="2.8" height="3.5" fill="#e4e4e4"/><rect x="12.5" y="13.8" width="13" height="3.2" rx="1.2" fill="#e4e4e4"/><rect x="12.5" y="17.8" width="13" height="1.3" fill="#e4e4e4"/><path d="M11.5 20.2 H26.5 L27.4 24.5 H10.6 Z" fill="#9c9c9c"/></svg>
<svg style="position:absolute;left:645.5px;top:292.7px;" width="41" height="34" viewBox="0 0 41 34"><path d="M20.5 7.6 L28.2 15.3 L20.5 23 L12.8 15.3 Z" stroke="#e4e4e4" stroke-width="1.5" fill="none"/><path d="M14.6 16.3 H26.4 L20.5 22 Z" fill="#e4e4e4"/><path d="M21 9 V14" stroke="#e4e4e4" stroke-width="1.1"/><circle cx="21.3" cy="7.4" r="1.7" stroke="#e4e4e4" stroke-width="1" fill="#282828"/><path d="M12.6 16 C11 18.5 9.2 20 9.2 21.8 A3.4 3.4 0 0 0 16 21.8 C16 20 14.2 18.5 12.6 16 Z" fill="#9c9c9c"/></svg>
<svg style="position:absolute;left:645.5px;top:327.9px;" width="41" height="34" viewBox="0 0 41 34"><rect x="11.7" y="14.5" width="10" height="9.7" fill="#9c9c9c"/><rect x="19.6" y="8.2" width="8.6" height="8.6" fill="#282828" stroke="#e4e4e4" stroke-width="1.3"/><path d="M21.5 10 H26.5 V15 Q26.5 10 21.5 10 Z" fill="#e4e4e4"/><path d="M21.5 10 Q26.5 10 26.5 15 L21.5 15 Z" fill="#e4e4e4"/></svg>
<svg style="position:absolute;left:645.5px;top:368.7px;" width="41" height="33" viewBox="0 0 41 33"><path d="M19.5 6.5 L23 10 L11 22 L7 23 L8 19 Z" stroke="#e4e4e4" stroke-width="1.6" fill="none" stroke-linejoin="round"/><path d="M17 9 L20.5 12.5" stroke="#e4e4e4" stroke-width="1.3"/><path d="M19.5 6.5 L23 10 L21.5 11.5 L18 8 Z" fill="#e4e4e4"/><path d="M8 23.5 Q12 27 17 24 Q23 19.5 28 21.5 Q31 23 32 24.5" stroke="#5dbb82" stroke-width="1.6" fill="none"/></svg>
<svg style="position:absolute;left:680.5px;top:396px;" width="4" height="4" viewBox="0 0 4 4"><path d="M4 0 V4 H0 Z" fill="#8a8a8a"/></svg>
<div class="t" style="left:704.5px;top:154.5px;font-size:12px;line-height:12px;color:#e6e6e6;font-weight:normal;">User Perspective</div>
<div class="t" style="left:704.5px;top:172.5px;font-size:12px;line-height:12px;color:#e6e6e6;font-weight:normal;">(1) Donut</div>
<svg style="position:absolute;left:1160px;top:155px;" width="70" height="80" viewBox="0 0 70 80"><path d="M34.5 39.5 V12 M34.5 39.5 L12.75 28 M34.5 39.5 L57.25 28" stroke-width="2.2" fill="none"/><path d="M34.5 39.5 V14" stroke="#3a8ee6" stroke-width="2.2"/><path d="M34.5 39.5 L14 28.5" stroke="#7ab83a" stroke-width="2.2"/><path d="M34.5 39.5 L55 28.5" stroke="#e04a63" stroke-width="2.2"/><circle cx="13" cy="51" r="7.5" fill="#7a3a48" fill-opacity="0.6" stroke="#e04a63" stroke-width="1.5"/><circle cx="57.25" cy="51" r="7.5" fill="#4a6a28" fill-opacity="0.6" stroke="#7ab83a" stroke-width="1.5"/><circle cx="35" cy="67" r="7.5" fill="#2a4a6e" fill-opacity="0.6" stroke="#3a8ee6" stroke-width="1.5"/><circle cx="34.5" cy="12" r="8.6" fill="#3a8ee6"/><circle cx="12.75" cy="28" r="8.6" fill="#76a838"/><circle cx="57.25" cy="28" r="8.6" fill="#d0435e"/><text x="34.5" y="16.5" font-family="Liberation Sans" font-size="12" font-weight="bold" fill="#1a1a1a" text-anchor="middle">Z</text><text x="12.75" y="32.5" font-family="Liberation Sans" font-size="12" font-weight="bold" fill="#1a1a1a" text-anchor="middle">Y</text><text x="57.25" y="32.5" font-family="Liberation Sans" font-size="12" font-weight="bold" fill="#1a1a1a" text-anchor="middle">X</text></svg>
<div style="left:1208.5px;top:235px;width:28px;height:28px;background:rgba(30,30,30,0.55);border-radius:14px;"></div>
<svg style="position:absolute;left:1212.5px;top:239px;" width="20" height="20" viewBox="0 0 20 20"><circle cx="12.2" cy="8.9" r="6.3" fill="#e6e6e6"/><path d="M12.2 6 V11.8 M9.3 8.9 H15.1" stroke="#2a2a2a" stroke-width="1.6"/><path d="M8 13 L3.2 17.8" stroke="#e6e6e6" stroke-width="2.4" stroke-linecap="round"/></svg>
<div style="left:1208.5px;top:264.6px;width:28px;height:28px;background:rgba(30,30,30,0.55);border-radius:14px;"></div>
<svg style="position:absolute;left:1212.5px;top:268.6px;" width="20" height="20" viewBox="0 0 20 20"><rect x="5.3" y="3" width="2.4" height="10" rx="1.2" fill="#e6e6e6"/><rect x="8.4" y="1.2" width="2.4" height="11" rx="1.2" fill="#e6e6e6"/><rect x="11.5" y="2" width="2.4" height="10" rx="1.2" fill="#e6e6e6"/><rect x="14.5" y="4.5" width="2.3" height="8" rx="1.15" fill="#e6e6e6"/><path d="M5.3 10 H16.8 V13 Q16.8 18 11.2 18 Q7.8 18 5.8 15.5 L1.8 11 Q1.2 9.6 2.7 9.6 Q3.8 9.6 5.3 11.2 Z" fill="#e6e6e6"/></svg>
<div style="left:1208.5px;top:294.9px;width:28px;height:28px;background:rgba(30,30,30,0.55);border-radius:14px;"></div>
<svg style="position:absolute;left:1212.5px;top:298.9px;" width="20" height="20" viewBox="0 0 20 20"><circle cx="6" cy="5" r="3" fill="#e6e6e6"/><circle cx="12" cy="5" r="3" fill="#e6e6e6"/><rect x="3" y="8" width="11" height="7" rx="1" fill="#e6e6e6"/><path d="M14 10 L18 8 V15 L14 13 Z" fill="#e6e6e6"/><circle cx="6" cy="5" r="1" fill="#2a2a2a"/><circle cx="12" cy="5" r="1" fill="#2a2a2a"/></svg>
<div style="left:1208.5px;top:325.7px;width:28px;height:28px;background:rgba(30,30,30,0.55);border-radius:14px;"></div>
<svg style="position:absolute;left:1212.5px;top:329.7px;" width="20" height="20" viewBox="0 0 20 20"><path d="M5 3 H15 L18 17 H2 Z M3.5 10 H16.5 M8.3 3 L7.5 17 M11.7 3 L12.5 17 M4.3 6.5 H15.7 M2.8 13.5 H17.2" stroke="#e6e6e6" stroke-width="1.2" fill="none"/></svg>
<div style="left:1237px;top:156px;width:9px;height:18px;background:rgba(30,30,30,0.45);border-radius:3px;"></div>
<svg style="position:absolute;left:1237px;top:160px;" width="8" height="11" viewBox="0 0 8 11"><path d="M6 1.5 L2 5.5 L6 9.5" stroke="#9a9a9a" stroke-width="1.3" fill="none"/></svg>
</div></div>
<svg style="position:absolute;left:67.5px;top:835.5px;" width="12" height="16" viewBox="0 0 12 16"><rect x="1" y="1" width="10" height="14" rx="3.5" stroke="#a8a8a8" stroke-width="1.2" fill="none"/><path d="M1.5 7 V4 Q1.5 1.5 5 1.5 H6 V7 Z" fill="#a8a8a8"/></svg>
<div class="t" style="left:90px;top:836.5px;font-size:12px;line-height:12px;color:#a8a8a8;font-weight:normal;">Pan View</div>
<svg style="position:absolute;left:312.5px;top:835.5px;" width="12" height="16" viewBox="0 0 12 16"><rect x="1" y="1" width="10" height="14" rx="3.5" stroke="#a8a8a8" stroke-width="1.2" fill="none"/><rect x="5" y="3.5" width="2" height="4" rx="1" fill="#a8a8a8"/></svg>
<div class="t" style="left:334.5px;top:836.5px;font-size:12px;line-height:12px;color:#a8a8a8;font-weight:normal;">Dolly View</div>
<svg style="position:absolute;left:557px;top:835.5px;" width="12" height="16" viewBox="0 0 12 16"><rect x="1" y="1" width="10" height="14" rx="3.5" stroke="#a8a8a8" stroke-width="1.2" fill="none"/><path d="M10.5 7 V4 Q10.5 1.5 7 1.5 H6 V7 Z" fill="#a8a8a8"/></svg>
<div class="t" style="right:65.5px;text-align:right;top:836.5px;font-size:12px;line-height:12px;color:#a8a8a8;font-weight:normal;">3.0.0</div>
<div style="left:256px;top:358px;width:256px;height:256px;background:#fdc774;"></div>
<svg style="position:absolute;left:380px;top:440px;" width="80" height="120" viewBox="0 0 80 120"><defs><filter id="tb" x="-50%" y="-50%" width="200%" height="200%"><feGaussianBlur stdDeviation="3"/></filter></defs><path d="M36 22 C30 30 26 45 27 60 C28 80 34 95 42 100 C50 102 55 90 55 70 C55 50 52 30 46 22 C42 17 39 18 36 22 Z" fill="#79fb6c" filter="url(#tb)"/><path d="M32 18 Q38 14 44 18" stroke="#c8e080" stroke-width="3" fill="none" filter="url(#tb)" opacity="0.5"/></svg>
<div class="t" style="left:224px;top:644px;font-size:17px;line-height:17px;color:#e8412c;font-weight:normal;">#3 - See the effect on your texture map!</div>
<div class="t" style="left:708px;top:297px;font-size:17px;line-height:17px;color:#e8412c;font-weight:normal;">#1 - Choose a color</div>
<div class="t" style="left:780px;top:722px;font-size:17px;line-height:17px;color:#e8412c;font-weight:normal;">#2 - Click &amp; drag on your donut</div>
</div></body></html>
